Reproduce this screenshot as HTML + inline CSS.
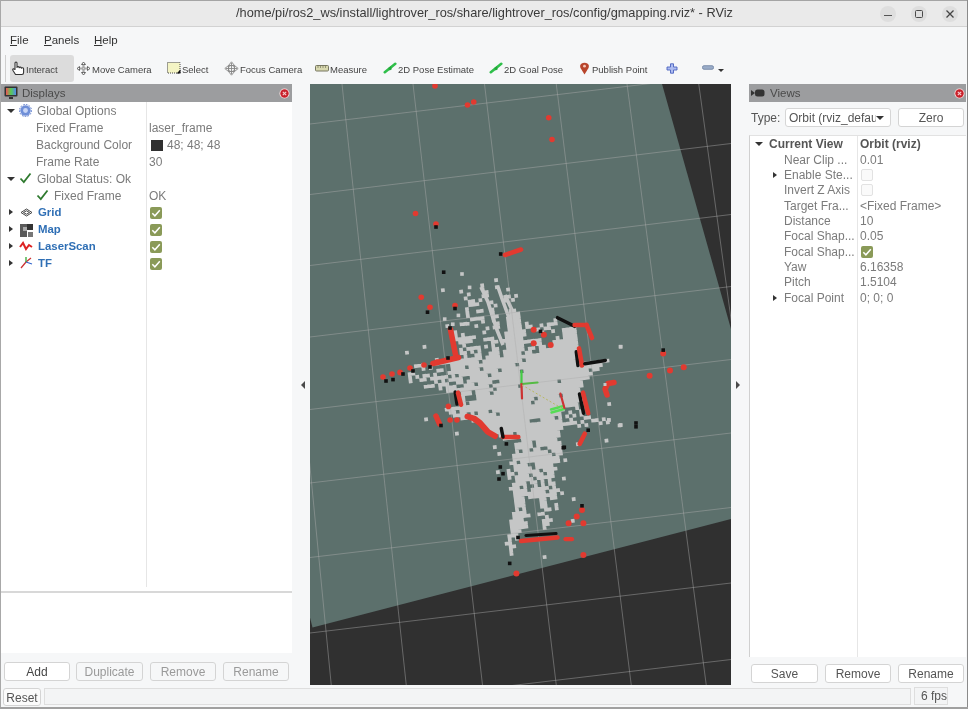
<!DOCTYPE html>
<html><head><meta charset="utf-8">
<style>
*{margin:0;padding:0;box-sizing:border-box}
html,body{width:968px;height:709px;overflow:hidden;background:#f6f7f8;font-family:"Liberation Sans",sans-serif;color:#3c3c3c}
.a{position:absolute}
.t{position:absolute;white-space:nowrap;line-height:1;will-change:transform}
#title{left:0;top:0;width:968px;height:27px;background:#eaeaea;border-top:1px solid #a4a4a4;border-bottom:1px solid #d2d2d2}
.wc{position:absolute;top:6px;width:16px;height:16px;border-radius:50%;background:#dedede}
.hdr{position:absolute;height:18px;background:#9c9d9f}
.tb{font-size:9.5px;color:#444}
.tree{font-size:12px;color:#7b7b7b}
.btn{will-change:transform;position:absolute;height:19px;border:1px solid #d4d4d4;border-radius:3px;background:#fbfbfb;font-size:12px;text-align:center;line-height:18.5px;color:#555}
.cb{position:absolute;width:12px;height:12px;border-radius:2px;background:#8a9a58}
.cbe{position:absolute;width:12px;height:12px;border-radius:2px;border:1px solid #e2e2e2;background:#fafafa}
.arr{position:absolute;width:0;height:0;border-top:3.5px solid transparent;border-bottom:3.5px solid transparent;border-left:4px solid #333}
.arrd{position:absolute;width:0;height:0;border-left:4px solid transparent;border-right:4px solid transparent;border-top:4px solid #333}
</style></head><body>
<!-- title bar -->
<div id="title" class="a"></div>
<div class="a" style="left:0;top:0;width:1px;height:709px;background:#a8a8a8"></div>
<div class="a" style="left:967px;top:0;width:1px;height:709px;background:#8a8a8a"></div>
<div class="t" style="left:236px;top:7px;font-size:12.78px;color:#3a3a3a">/home/pi/ros2_ws/install/lightrover_ros/share/lightrover_ros/config/gmapping.rviz* - RViz</div>
<div class="wc" style="left:880px"></div>
<div class="wc" style="left:911px"></div>
<div class="wc" style="left:942px"></div>
<div class="a" style="left:884px;top:15px;width:8px;height:1.3px;background:#555"></div>
<div class="a" style="left:915px;top:10px;width:8px;height:8px;border:1.3px solid #4a4a4a;border-radius:1.5px"></div>
<svg class="a" style="left:946px;top:10px" width="8" height="8"><path d="M0.5 0.5L7.5 7.5M7.5 0.5L0.5 7.5" stroke="#444" stroke-width="1.3"/></svg>

<!-- menu -->
<div class="t" style="left:10px;top:35px;font-size:11.5px;color:#333"><u>F</u>ile</div>
<div class="t" style="left:44px;top:35px;font-size:11.5px;color:#333"><u>P</u>anels</div>
<div class="t" style="left:94px;top:35px;font-size:11.5px;color:#333"><u>H</u>elp</div>

<!-- toolbar -->
<div class="a" style="left:5px;top:55px;width:1px;height:27px;background:#cfcfcf"></div>
<div class="a" style="left:10px;top:55px;width:64px;height:27px;background:#dcdcdc;border-radius:3px"></div>
<div class="t tb" style="left:26px;top:65px">Interact</div>
<div class="t tb" style="left:92px;top:65px">Move Camera</div>
<div class="t tb" style="left:182px;top:65px">Select</div>
<div class="t tb" style="left:240px;top:65px">Focus Camera</div>
<div class="t tb" style="left:330px;top:65px">Measure</div>
<div class="t tb" style="left:398px;top:65px">2D Pose Estimate</div>
<div class="t tb" style="left:504px;top:65px">2D Goal Pose</div>
<div class="t tb" style="left:592px;top:65px">Publish Point</div>

<!-- toolbar icons -->
<svg class="a" style="left:11px;top:61px" width="15" height="15" viewBox="0 0 15 15"><path d="M4.5 13.5L2 9.5Q1.2 8 2.5 7.8L4 8.5V2Q4 1 5 1Q6 1 6 2V6.5Q6.2 5.5 7.2 5.6Q8.2 5.7 8.2 6.8Q8.5 6 9.4 6.1Q10.4 6.2 10.4 7.3Q10.8 6.6 11.7 6.8Q12.6 7 12.6 8V11.5Q12.6 13.5 11 13.5Z" fill="#fff" stroke="#333" stroke-width="1.1" stroke-linejoin="round"/></svg>
<svg class="a" style="left:76px;top:61px" width="15" height="15" viewBox="0 0 15 15"><path d="M7.5 1L5.5 3.5H9.5ZM7.5 14L5.5 11.5H9.5ZM1 7.5L3.5 5.5V9.5ZM14 7.5L11.5 5.5V9.5Z" fill="#fff" stroke="#555" stroke-width="0.9"/><path d="M7.5 3.5V11.5M3.5 7.5H11.5" stroke="#555" stroke-width="1.6"/><path d="M7.5 3.5V11.5M3.5 7.5H11.5" stroke="#fff" stroke-width="0.5"/></svg>
<svg class="a" style="left:167px;top:62px" width="14" height="12" viewBox="0 0 14 12"><rect x="0.5" y="0.5" width="12.5" height="10.5" fill="#f4f4c4" stroke="#444" stroke-width="1" stroke-dasharray="1,1"/><path d="M13.5 7.5V11.5H9.5Z" fill="#111"/></svg>
<svg class="a" style="left:224px;top:61px" width="15" height="15" viewBox="0 0 15 15"><path d="M7.5 0.8L10.5 4.5H4.5ZM7.5 14.2L10.5 10.5H4.5ZM0.8 7.5L4.5 4.5V10.5ZM14.2 7.5L10.5 4.5V10.5Z" fill="#f0f0f0" stroke="#888" stroke-width="0.9"/><circle cx="7.5" cy="7.5" r="3.2" fill="none" stroke="#888" stroke-width="1"/><path d="M7.5 2V13M2 7.5H13" stroke="#888" stroke-width="0.9"/></svg>
<svg class="a" style="left:315px;top:65px" width="14" height="7" viewBox="0 0 14 7"><rect x="0.5" y="0.5" width="13" height="5.5" rx="1" fill="#d9d9b0" stroke="#777760" stroke-width="1"/><path d="M3 1V3M5.5 1V3M8 1V3M10.5 1V3" stroke="#777760" stroke-width="0.7"/></svg>
<svg class="a" style="left:383px;top:62px" width="14" height="12" viewBox="0 0 14 12"><path d="M1.8 10.2L12.3 1.8" stroke="#2fbf4a" stroke-width="2.6" stroke-linecap="round"/><path d="M5.2 6L7.8 4.2L8.8 7.2L6.6 8.6Z" fill="#22a83a"/></svg>
<svg class="a" style="left:489px;top:62px" width="14" height="12" viewBox="0 0 14 12"><path d="M1.8 10.2L12.3 1.8" stroke="#2fbf4a" stroke-width="2.6" stroke-linecap="round"/><path d="M5.2 6L7.8 4.2L8.8 7.2L6.6 8.6Z" fill="#22a83a"/></svg>
<svg class="a" style="left:579px;top:62px" width="11" height="13" viewBox="0 0 11 13"><path d="M5.5 12.5L1.8 6.5Q0.8 4.8 1.2 3.4Q2 0.8 5.5 0.8Q9 0.8 9.8 3.4Q10.2 4.8 9.2 6.5Z" fill="#b8452c"/><circle cx="5.5" cy="4.2" r="1.4" fill="#f3c6b8"/></svg>
<svg class="a" style="left:666px;top:63px" width="12" height="11" viewBox="0 0 12 11"><path d="M4.5 0.8H7.5V4H11V7H7.5V10.2H4.5V7H1V4H4.5Z" fill="#aebcf0" stroke="#4a62c0" stroke-width="0.9" stroke-linejoin="round"/></svg>
<svg class="a" style="left:702px;top:65px" width="12" height="5" viewBox="0 0 12 5"><rect x="0.5" y="0.7" width="11" height="3.6" rx="1.5" fill="#9aacc8" stroke="#6a7fa0" stroke-width="0.8"/></svg>
<div class="arrd" style="left:718px;top:69px;border-left-width:3px;border-right-width:3px;border-top-width:3.5px"></div>
<!-- left panel -->
<div class="hdr" style="left:1px;top:84px;width:291px"></div>
<div class="t" style="left:22px;top:88px;font-size:11.5px;color:#4a4a4a">Displays</div>
<svg class="a" style="left:4px;top:86px" width="14" height="14" viewBox="0 0 14 14"><rect x="0.5" y="0.5" width="13" height="10" rx="1" fill="#333"/><rect x="2" y="2" width="10" height="7" fill="url(#rg)"/><defs><linearGradient id="rg" x1="0" x2="1"><stop offset="0" stop-color="#e55"/><stop offset="0.5" stop-color="#5c5"/><stop offset="1" stop-color="#58e"/></linearGradient></defs><rect x="5" y="11" width="4" height="2" fill="#333"/></svg>
<div class="a" style="left:1px;top:102px;width:291px;height:490px;background:#fff"></div>
<div class="a" style="left:146px;top:102px;width:1px;height:485px;background:#e6e6e6"></div>
<div class="a" style="left:1px;top:591px;width:291px;height:2px;background:#d8d8d8"></div>
<div class="a" style="left:1px;top:593px;width:291px;height:60px;background:#fff"></div>

<!-- displays tree -->
<div class="arrd" style="left:7px;top:109px"></div>
<svg class="a" style="left:19px;top:104px" width="13" height="13" viewBox="0 0 13 13"><circle cx="6.5" cy="6.5" r="5.2" fill="#6f8fd8"/><circle cx="6.5" cy="6.5" r="2.4" fill="#c9d6f5"/><circle cx="6.5" cy="6.5" r="6" fill="none" stroke="#5878c8" stroke-width="1" stroke-dasharray="1.6,1.2"/></svg>
<div class="t tree" style="left:37px;top:105px">Global Options</div>
<div class="t tree" style="left:36px;top:122px">Fixed Frame</div>
<div class="t tree" style="left:36px;top:139px">Background Color</div>
<div class="t tree" style="left:36px;top:156px">Frame Rate</div>
<div class="t tree" style="left:149px;top:122px">laser_frame</div>
<div class="a" style="left:151px;top:140px;width:12px;height:11px;background:#303030"></div>
<div class="t tree" style="left:167px;top:139px">48; 48; 48</div>
<div class="t tree" style="left:149px;top:156px">30</div>
<div class="arrd" style="left:7px;top:177px"></div>
<svg class="a" style="left:19px;top:172px" width="13" height="12" viewBox="0 0 13 12"><path d="M1.5 6.5L4.8 10L11.5 1.5" stroke="#2f7a2f" stroke-width="1.8" fill="none"/></svg>
<div class="t tree" style="left:37px;top:173px">Global Status: Ok</div>
<svg class="a" style="left:36px;top:189px" width="13" height="12" viewBox="0 0 13 12"><path d="M1.5 6.5L4.8 10L11.5 1.5" stroke="#2f7a2f" stroke-width="1.8" fill="none"/></svg>
<div class="t tree" style="left:54px;top:190px">Fixed Frame</div>
<div class="t tree" style="left:149px;top:190px">OK</div>
<div class="arr" style="left:9px;top:209px"></div>
<div class="arr" style="left:9px;top:226px"></div>
<div class="arr" style="left:9px;top:243px"></div>
<div class="arr" style="left:9px;top:260px"></div>
<svg class="a" style="left:20px;top:208px" width="13" height="9" viewBox="0 0 13 9"><path d="M1 4.5L6.5 1L12 4.5L6.5 8Z M3.5 4.5L6.5 2.8L9.5 4.5L6.5 6.2Z" stroke="#444" stroke-width="1" fill="none"/></svg>
<svg class="a" style="left:20px;top:224px" width="13" height="13" viewBox="0 0 13 13"><rect x="0" y="0" width="7" height="13" fill="#5a5a5a"/><rect x="7" y="0" width="6" height="6" fill="#333"/><rect x="3" y="3" width="4" height="4" fill="#aaa"/><rect x="8" y="8" width="5" height="5" fill="#777"/></svg>
<svg class="a" style="left:19px;top:241px" width="14" height="10" viewBox="0 0 14 10"><path d="M1 6L4 2L7 8L10 4L13 6" stroke="#d22" stroke-width="2" fill="none"/></svg>
<svg class="a" style="left:19px;top:256px" width="14" height="13" viewBox="0 0 14 13"><path d="M2 12L7 6L12 2" stroke="#c33" stroke-width="1.3" fill="none"/><path d="M7 6L7 1" stroke="#3a3" stroke-width="1.3"/><path d="M7 6L13 8" stroke="#36c" stroke-width="1.3"/></svg>
<div class="t" style="left:38px;top:207px;font-size:11.4px;font-weight:bold;color:#2f6fb5">Grid</div>
<div class="t" style="left:38px;top:224px;font-size:11.4px;font-weight:bold;color:#2f6fb5">Map</div>
<div class="t" style="left:38px;top:241px;font-size:11.4px;font-weight:bold;color:#2f6fb5">LaserScan</div>
<div class="t" style="left:38px;top:258px;font-size:11.4px;font-weight:bold;color:#2f6fb5">TF</div>
<div class="cb" style="left:150px;top:207px"><svg width="12" height="12" viewBox="0 0 12 12" style="position:absolute;left:0;top:0"><path d="M2.3 6.2L4.9 8.8L9.8 3.2" stroke="#fff" stroke-width="1.5" fill="none"/></svg></div>
<div class="cb" style="left:150px;top:224px"><svg width="12" height="12" viewBox="0 0 12 12" style="position:absolute;left:0;top:0"><path d="M2.3 6.2L4.9 8.8L9.8 3.2" stroke="#fff" stroke-width="1.5" fill="none"/></svg></div>
<div class="cb" style="left:150px;top:241px"><svg width="12" height="12" viewBox="0 0 12 12" style="position:absolute;left:0;top:0"><path d="M2.3 6.2L4.9 8.8L9.8 3.2" stroke="#fff" stroke-width="1.5" fill="none"/></svg></div>
<div class="cb" style="left:150px;top:258px"><svg width="12" height="12" viewBox="0 0 12 12" style="position:absolute;left:0;top:0"><path d="M2.3 6.2L4.9 8.8L9.8 3.2" stroke="#fff" stroke-width="1.5" fill="none"/></svg></div>
<!-- buttons -->
<div class="btn" style="left:4px;top:662px;width:66px;color:#444;background:#fff">Add</div>
<div class="btn" style="left:76px;top:662px;width:67px;color:#9a9a9a;background:#f6f7f8">Duplicate</div>
<div class="btn" style="left:150px;top:662px;width:66px;color:#9a9a9a;background:#f6f7f8">Remove</div>
<div class="btn" style="left:223px;top:662px;width:66px;color:#9a9a9a;background:#f6f7f8">Rename</div>
<!-- 3D view -->
<svg class="a" style="left:310px;top:84px" width="421" height="601" viewBox="310 84 421 601">
<!--VIEW-->
<rect x="310" y="84" width="421" height="601" fill="#303030"/>
<polygon points="310,84 662,84 731,329 731,519 312.5,627.5 310,617.5" fill="#5c706c"/>
<defs><filter id="bl" x="-5%" y="-5%" width="110%" height="110%"><feGaussianBlur stdDeviation="0.4"/></filter></defs>
<g filter="url(#bl)"><path d="M494.0 278.5l3.72 -0.46 0.46 3.72 -3.72 0.46zM440.8 288.6l3.72 -0.46 0.46 3.72 -3.72 0.46zM480.1 283.8l3.72 -0.46 0.46 3.72 -3.72 0.46zM459.1 290.0l3.72 -0.46 0.46 3.72 -3.72 0.46zM480.5 287.4l3.72 -0.46 0.46 3.72 -3.72 0.46zM494.8 285.6l3.72 -0.46 0.46 3.72 -3.72 0.46zM466.7 292.7l3.72 -0.46 0.46 3.72 -3.72 0.46zM484.6 290.5l3.72 -0.46 0.46 3.72 -3.72 0.46zM506.0 287.9l3.72 -0.46 0.46 3.72 -3.72 0.46zM463.6 296.7l3.72 -0.46 0.46 3.72 -3.72 0.46zM481.4 294.5l3.72 -0.46 0.46 3.72 -3.72 0.46zM485.0 294.1l3.72 -0.46 0.46 3.72 -3.72 0.46zM467.6 299.9l3.72 -0.46 0.46 3.72 -3.72 0.46zM471.1 299.4l3.72 -0.46 0.46 3.72 -3.72 0.46zM478.3 298.6l3.72 -0.46 0.46 3.72 -3.72 0.46zM503.3 295.5l3.72 -0.46 0.46 3.72 -3.72 0.46zM506.9 295.0l3.72 -0.46 0.46 3.72 -3.72 0.46zM514.0 294.2l3.72 -0.46 0.46 3.72 -3.72 0.46zM468.0 303.4l3.72 -0.46 0.46 3.72 -3.72 0.46zM471.6 303.0l3.72 -0.46 0.46 3.72 -3.72 0.46zM475.2 302.6l3.72 -0.46 0.46 3.72 -3.72 0.46zM489.4 300.8l3.72 -0.46 0.46 3.72 -3.72 0.46zM503.7 299.1l3.72 -0.46 0.46 3.72 -3.72 0.46zM510.9 298.2l3.72 -0.46 0.46 3.72 -3.72 0.46zM464.9 307.5l3.72 -0.46 0.46 3.72 -3.72 0.46zM493.5 303.9l3.72 -0.46 0.46 3.72 -3.72 0.46zM465.3 311.0l3.72 -0.46 0.46 3.72 -3.72 0.46zM476.0 309.7l3.72 -0.46 0.46 3.72 -3.72 0.46zM479.6 309.3l3.72 -0.46 0.46 3.72 -3.72 0.46zM490.3 308.0l3.72 -0.46 0.46 3.72 -3.72 0.46zM465.8 314.6l3.72 -0.46 0.46 3.72 -3.72 0.46zM490.8 311.5l3.72 -0.46 0.46 3.72 -3.72 0.46zM508.6 309.3l3.72 -0.46 0.46 3.72 -3.72 0.46zM512.2 308.9l3.72 -0.46 0.46 3.72 -3.72 0.46zM469.8 317.7l3.72 -0.46 0.46 3.72 -3.72 0.46zM473.3 317.3l3.72 -0.46 0.46 3.72 -3.72 0.46zM476.9 316.9l3.72 -0.46 0.46 3.72 -3.72 0.46zM480.5 316.4l3.72 -0.46 0.46 3.72 -3.72 0.46zM491.2 315.1l3.72 -0.46 0.46 3.72 -3.72 0.46zM494.8 314.7l3.72 -0.46 0.46 3.72 -3.72 0.46zM509.1 312.9l3.72 -0.46 0.46 3.72 -3.72 0.46zM512.6 312.5l3.72 -0.46 0.46 3.72 -3.72 0.46zM516.2 312.0l3.72 -0.46 0.46 3.72 -3.72 0.46zM445.2 324.4l3.72 -0.46 0.46 3.72 -3.72 0.46zM459.5 322.6l3.72 -0.46 0.46 3.72 -3.72 0.46zM463.1 322.2l3.72 -0.46 0.46 3.72 -3.72 0.46zM480.9 320.0l3.72 -0.46 0.46 3.72 -3.72 0.46zM491.6 318.7l3.72 -0.46 0.46 3.72 -3.72 0.46zM505.9 316.9l3.72 -0.46 0.46 3.72 -3.72 0.46zM509.5 316.5l3.72 -0.46 0.46 3.72 -3.72 0.46zM513.1 316.0l3.72 -0.46 0.46 3.72 -3.72 0.46zM516.7 315.6l3.72 -0.46 0.46 3.72 -3.72 0.46zM474.2 324.4l3.72 -0.46 0.46 3.72 -3.72 0.46zM495.7 321.8l3.72 -0.46 0.46 3.72 -3.72 0.46zM506.4 320.5l3.72 -0.46 0.46 3.72 -3.72 0.46zM509.9 320.1l3.72 -0.46 0.46 3.72 -3.72 0.46zM513.5 319.6l3.72 -0.46 0.46 3.72 -3.72 0.46zM517.1 319.2l3.72 -0.46 0.46 3.72 -3.72 0.46zM453.2 330.6l3.72 -0.46 0.46 3.72 -3.72 0.46zM485.4 326.7l3.72 -0.46 0.46 3.72 -3.72 0.46zM492.5 325.8l3.72 -0.46 0.46 3.72 -3.72 0.46zM496.1 325.4l3.72 -0.46 0.46 3.72 -3.72 0.46zM506.8 324.1l3.72 -0.46 0.46 3.72 -3.72 0.46zM510.4 323.6l3.72 -0.46 0.46 3.72 -3.72 0.46zM514.0 323.2l3.72 -0.46 0.46 3.72 -3.72 0.46zM517.5 322.8l3.72 -0.46 0.46 3.72 -3.72 0.46zM524.7 321.9l3.72 -0.46 0.46 3.72 -3.72 0.46zM553.3 318.4l3.72 -0.46 0.46 3.72 -3.72 0.46zM453.7 334.2l3.72 -0.46 0.46 3.72 -3.72 0.46zM460.8 333.3l3.72 -0.46 0.46 3.72 -3.72 0.46zM482.2 330.7l3.72 -0.46 0.46 3.72 -3.72 0.46zM507.3 327.6l3.72 -0.46 0.46 3.72 -3.72 0.46zM510.8 327.2l3.72 -0.46 0.46 3.72 -3.72 0.46zM514.4 326.8l3.72 -0.46 0.46 3.72 -3.72 0.46zM518.0 326.3l3.72 -0.46 0.46 3.72 -3.72 0.46zM525.1 325.4l3.72 -0.46 0.46 3.72 -3.72 0.46zM528.7 325.0l3.72 -0.46 0.46 3.72 -3.72 0.46zM539.4 323.7l3.72 -0.46 0.46 3.72 -3.72 0.46zM546.6 322.8l3.72 -0.46 0.46 3.72 -3.72 0.46zM550.1 322.4l3.72 -0.46 0.46 3.72 -3.72 0.46zM553.7 321.9l3.72 -0.46 0.46 3.72 -3.72 0.46zM454.1 337.8l3.72 -0.46 0.46 3.72 -3.72 0.46zM457.7 337.4l3.72 -0.46 0.46 3.72 -3.72 0.46zM461.2 336.9l3.72 -0.46 0.46 3.72 -3.72 0.46zM464.8 336.5l3.72 -0.46 0.46 3.72 -3.72 0.46zM468.4 336.0l3.72 -0.46 0.46 3.72 -3.72 0.46zM472.0 335.6l3.72 -0.46 0.46 3.72 -3.72 0.46zM504.1 331.7l3.72 -0.46 0.46 3.72 -3.72 0.46zM507.7 331.2l3.72 -0.46 0.46 3.72 -3.72 0.46zM511.3 330.8l3.72 -0.46 0.46 3.72 -3.72 0.46zM514.8 330.3l3.72 -0.46 0.46 3.72 -3.72 0.46zM518.4 329.9l3.72 -0.46 0.46 3.72 -3.72 0.46zM522.0 329.5l3.72 -0.46 0.46 3.72 -3.72 0.46zM532.7 328.1l3.72 -0.46 0.46 3.72 -3.72 0.46zM536.3 327.7l3.72 -0.46 0.46 3.72 -3.72 0.46zM543.4 326.8l3.72 -0.46 0.46 3.72 -3.72 0.46zM547.0 326.4l3.72 -0.46 0.46 3.72 -3.72 0.46zM422.4 345.3l3.72 -0.46 0.46 3.72 -3.72 0.46zM458.1 340.9l3.72 -0.46 0.46 3.72 -3.72 0.46zM461.7 340.5l3.72 -0.46 0.46 3.72 -3.72 0.46zM465.2 340.1l3.72 -0.46 0.46 3.72 -3.72 0.46zM468.8 339.6l3.72 -0.46 0.46 3.72 -3.72 0.46zM483.1 337.9l3.72 -0.46 0.46 3.72 -3.72 0.46zM486.7 337.4l3.72 -0.46 0.46 3.72 -3.72 0.46zM490.3 337.0l3.72 -0.46 0.46 3.72 -3.72 0.46zM504.6 335.2l3.72 -0.46 0.46 3.72 -3.72 0.46zM508.1 334.8l3.72 -0.46 0.46 3.72 -3.72 0.46zM511.7 334.3l3.72 -0.46 0.46 3.72 -3.72 0.46zM515.3 333.9l3.72 -0.46 0.46 3.72 -3.72 0.46zM518.8 333.5l3.72 -0.46 0.46 3.72 -3.72 0.46zM522.4 333.0l3.72 -0.46 0.46 3.72 -3.72 0.46zM540.3 330.8l3.72 -0.46 0.46 3.72 -3.72 0.46zM551.0 329.5l3.72 -0.46 0.46 3.72 -3.72 0.46zM561.7 328.2l3.72 -0.46 0.46 3.72 -3.72 0.46zM565.3 327.8l3.72 -0.46 0.46 3.72 -3.72 0.46zM568.9 327.3l3.72 -0.46 0.46 3.72 -3.72 0.46zM572.4 326.9l3.72 -0.46 0.46 3.72 -3.72 0.46zM404.9 351.1l3.72 -0.46 0.46 3.72 -3.72 0.46zM462.1 344.1l3.72 -0.46 0.46 3.72 -3.72 0.46zM490.7 340.6l3.72 -0.46 0.46 3.72 -3.72 0.46zM494.3 340.1l3.72 -0.46 0.46 3.72 -3.72 0.46zM501.4 339.2l3.72 -0.46 0.46 3.72 -3.72 0.46zM505.0 338.8l3.72 -0.46 0.46 3.72 -3.72 0.46zM508.6 338.4l3.72 -0.46 0.46 3.72 -3.72 0.46zM512.1 337.9l3.72 -0.46 0.46 3.72 -3.72 0.46zM515.7 337.5l3.72 -0.46 0.46 3.72 -3.72 0.46zM519.3 337.0l3.72 -0.46 0.46 3.72 -3.72 0.46zM562.2 331.8l3.72 -0.46 0.46 3.72 -3.72 0.46zM565.7 331.3l3.72 -0.46 0.46 3.72 -3.72 0.46zM569.3 330.9l3.72 -0.46 0.46 3.72 -3.72 0.46zM572.9 330.5l3.72 -0.46 0.46 3.72 -3.72 0.46zM459.0 348.1l3.72 -0.46 0.46 3.72 -3.72 0.46zM466.1 347.2l3.72 -0.46 0.46 3.72 -3.72 0.46zM469.7 346.8l3.72 -0.46 0.46 3.72 -3.72 0.46zM473.3 346.3l3.72 -0.46 0.46 3.72 -3.72 0.46zM476.8 345.9l3.72 -0.46 0.46 3.72 -3.72 0.46zM484.0 345.0l3.72 -0.46 0.46 3.72 -3.72 0.46zM491.1 344.1l3.72 -0.46 0.46 3.72 -3.72 0.46zM505.4 342.4l3.72 -0.46 0.46 3.72 -3.72 0.46zM509.0 341.9l3.72 -0.46 0.46 3.72 -3.72 0.46zM512.6 341.5l3.72 -0.46 0.46 3.72 -3.72 0.46zM516.2 341.1l3.72 -0.46 0.46 3.72 -3.72 0.46zM519.7 340.6l3.72 -0.46 0.46 3.72 -3.72 0.46zM523.3 340.2l3.72 -0.46 0.46 3.72 -3.72 0.46zM526.9 339.7l3.72 -0.46 0.46 3.72 -3.72 0.46zM530.4 339.3l3.72 -0.46 0.46 3.72 -3.72 0.46zM534.0 338.9l3.72 -0.46 0.46 3.72 -3.72 0.46zM537.6 338.4l3.72 -0.46 0.46 3.72 -3.72 0.46zM555.5 336.2l3.72 -0.46 0.46 3.72 -3.72 0.46zM562.6 335.4l3.72 -0.46 0.46 3.72 -3.72 0.46zM566.2 334.9l3.72 -0.46 0.46 3.72 -3.72 0.46zM569.7 334.5l3.72 -0.46 0.46 3.72 -3.72 0.46zM573.3 334.0l3.72 -0.46 0.46 3.72 -3.72 0.46zM459.4 351.6l3.72 -0.46 0.46 3.72 -3.72 0.46zM463.0 351.2l3.72 -0.46 0.46 3.72 -3.72 0.46zM470.1 350.3l3.72 -0.46 0.46 3.72 -3.72 0.46zM477.3 349.5l3.72 -0.46 0.46 3.72 -3.72 0.46zM491.6 347.7l3.72 -0.46 0.46 3.72 -3.72 0.46zM495.2 347.3l3.72 -0.46 0.46 3.72 -3.72 0.46zM505.9 345.9l3.72 -0.46 0.46 3.72 -3.72 0.46zM509.4 345.5l3.72 -0.46 0.46 3.72 -3.72 0.46zM513.0 345.1l3.72 -0.46 0.46 3.72 -3.72 0.46zM516.6 344.6l3.72 -0.46 0.46 3.72 -3.72 0.46zM520.2 344.2l3.72 -0.46 0.46 3.72 -3.72 0.46zM534.5 342.4l3.72 -0.46 0.46 3.72 -3.72 0.46zM538.0 342.0l3.72 -0.46 0.46 3.72 -3.72 0.46zM552.3 340.2l3.72 -0.46 0.46 3.72 -3.72 0.46zM555.9 339.8l3.72 -0.46 0.46 3.72 -3.72 0.46zM559.5 339.4l3.72 -0.46 0.46 3.72 -3.72 0.46zM563.0 338.9l3.72 -0.46 0.46 3.72 -3.72 0.46zM566.6 338.5l3.72 -0.46 0.46 3.72 -3.72 0.46zM570.2 338.0l3.72 -0.46 0.46 3.72 -3.72 0.46zM573.8 337.6l3.72 -0.46 0.46 3.72 -3.72 0.46zM434.8 358.3l3.72 -0.46 0.46 3.72 -3.72 0.46zM463.4 354.8l3.72 -0.46 0.46 3.72 -3.72 0.46zM474.2 353.5l3.72 -0.46 0.46 3.72 -3.72 0.46zM477.7 353.0l3.72 -0.46 0.46 3.72 -3.72 0.46zM488.4 351.7l3.72 -0.46 0.46 3.72 -3.72 0.46zM492.0 351.3l3.72 -0.46 0.46 3.72 -3.72 0.46zM495.6 350.8l3.72 -0.46 0.46 3.72 -3.72 0.46zM502.7 350.0l3.72 -0.46 0.46 3.72 -3.72 0.46zM506.3 349.5l3.72 -0.46 0.46 3.72 -3.72 0.46zM509.9 349.1l3.72 -0.46 0.46 3.72 -3.72 0.46zM513.5 348.6l3.72 -0.46 0.46 3.72 -3.72 0.46zM517.0 348.2l3.72 -0.46 0.46 3.72 -3.72 0.46zM520.6 347.8l3.72 -0.46 0.46 3.72 -3.72 0.46zM527.7 346.9l3.72 -0.46 0.46 3.72 -3.72 0.46zM531.3 346.4l3.72 -0.46 0.46 3.72 -3.72 0.46zM538.5 345.6l3.72 -0.46 0.46 3.72 -3.72 0.46zM542.0 345.1l3.72 -0.46 0.46 3.72 -3.72 0.46zM549.2 344.3l3.72 -0.46 0.46 3.72 -3.72 0.46zM552.8 343.8l3.72 -0.46 0.46 3.72 -3.72 0.46zM556.3 343.4l3.72 -0.46 0.46 3.72 -3.72 0.46zM559.9 342.9l3.72 -0.46 0.46 3.72 -3.72 0.46zM563.5 342.5l3.72 -0.46 0.46 3.72 -3.72 0.46zM567.1 342.1l3.72 -0.46 0.46 3.72 -3.72 0.46zM570.6 341.6l3.72 -0.46 0.46 3.72 -3.72 0.46zM574.2 341.2l3.72 -0.46 0.46 3.72 -3.72 0.46zM413.8 364.5l3.72 -0.46 0.46 3.72 -3.72 0.46zM417.4 364.1l3.72 -0.46 0.46 3.72 -3.72 0.46zM421.0 363.6l3.72 -0.46 0.46 3.72 -3.72 0.46zM431.7 362.3l3.72 -0.46 0.46 3.72 -3.72 0.46zM435.3 361.9l3.72 -0.46 0.46 3.72 -3.72 0.46zM438.9 361.4l3.72 -0.46 0.46 3.72 -3.72 0.46zM442.4 361.0l3.72 -0.46 0.46 3.72 -3.72 0.46zM446.0 360.6l3.72 -0.46 0.46 3.72 -3.72 0.46zM449.6 360.1l3.72 -0.46 0.46 3.72 -3.72 0.46zM453.2 359.7l3.72 -0.46 0.46 3.72 -3.72 0.46zM456.7 359.2l3.72 -0.46 0.46 3.72 -3.72 0.46zM460.3 358.8l3.72 -0.46 0.46 3.72 -3.72 0.46zM463.9 358.4l3.72 -0.46 0.46 3.72 -3.72 0.46zM467.4 357.9l3.72 -0.46 0.46 3.72 -3.72 0.46zM471.0 357.5l3.72 -0.46 0.46 3.72 -3.72 0.46zM474.6 357.0l3.72 -0.46 0.46 3.72 -3.72 0.46zM478.2 356.6l3.72 -0.46 0.46 3.72 -3.72 0.46zM485.3 355.7l3.72 -0.46 0.46 3.72 -3.72 0.46zM488.9 355.3l3.72 -0.46 0.46 3.72 -3.72 0.46zM492.5 354.8l3.72 -0.46 0.46 3.72 -3.72 0.46zM496.0 354.4l3.72 -0.46 0.46 3.72 -3.72 0.46zM503.2 353.5l3.72 -0.46 0.46 3.72 -3.72 0.46zM506.7 353.1l3.72 -0.46 0.46 3.72 -3.72 0.46zM510.3 352.7l3.72 -0.46 0.46 3.72 -3.72 0.46zM513.9 352.2l3.72 -0.46 0.46 3.72 -3.72 0.46zM517.5 351.8l3.72 -0.46 0.46 3.72 -3.72 0.46zM524.6 350.9l3.72 -0.46 0.46 3.72 -3.72 0.46zM528.2 350.5l3.72 -0.46 0.46 3.72 -3.72 0.46zM538.9 349.1l3.72 -0.46 0.46 3.72 -3.72 0.46zM542.5 348.7l3.72 -0.46 0.46 3.72 -3.72 0.46zM546.1 348.3l3.72 -0.46 0.46 3.72 -3.72 0.46zM549.6 347.8l3.72 -0.46 0.46 3.72 -3.72 0.46zM553.2 347.4l3.72 -0.46 0.46 3.72 -3.72 0.46zM556.8 347.0l3.72 -0.46 0.46 3.72 -3.72 0.46zM560.3 346.5l3.72 -0.46 0.46 3.72 -3.72 0.46zM563.9 346.1l3.72 -0.46 0.46 3.72 -3.72 0.46zM567.5 345.6l3.72 -0.46 0.46 3.72 -3.72 0.46zM571.1 345.2l3.72 -0.46 0.46 3.72 -3.72 0.46zM574.6 344.8l3.72 -0.46 0.46 3.72 -3.72 0.46zM421.4 367.2l3.72 -0.46 0.46 3.72 -3.72 0.46zM428.6 366.3l3.72 -0.46 0.46 3.72 -3.72 0.46zM450.0 363.7l3.72 -0.46 0.46 3.72 -3.72 0.46zM453.6 363.2l3.72 -0.46 0.46 3.72 -3.72 0.46zM457.2 362.8l3.72 -0.46 0.46 3.72 -3.72 0.46zM460.7 362.4l3.72 -0.46 0.46 3.72 -3.72 0.46zM464.3 361.9l3.72 -0.46 0.46 3.72 -3.72 0.46zM467.9 361.5l3.72 -0.46 0.46 3.72 -3.72 0.46zM471.5 361.1l3.72 -0.46 0.46 3.72 -3.72 0.46zM475.0 360.6l3.72 -0.46 0.46 3.72 -3.72 0.46zM482.2 359.7l3.72 -0.46 0.46 3.72 -3.72 0.46zM485.7 359.3l3.72 -0.46 0.46 3.72 -3.72 0.46zM489.3 358.9l3.72 -0.46 0.46 3.72 -3.72 0.46zM492.9 358.4l3.72 -0.46 0.46 3.72 -3.72 0.46zM496.5 358.0l3.72 -0.46 0.46 3.72 -3.72 0.46zM500.0 357.5l3.72 -0.46 0.46 3.72 -3.72 0.46zM503.6 357.1l3.72 -0.46 0.46 3.72 -3.72 0.46zM507.2 356.7l3.72 -0.46 0.46 3.72 -3.72 0.46zM510.8 356.2l3.72 -0.46 0.46 3.72 -3.72 0.46zM514.3 355.8l3.72 -0.46 0.46 3.72 -3.72 0.46zM517.9 355.3l3.72 -0.46 0.46 3.72 -3.72 0.46zM521.5 354.9l3.72 -0.46 0.46 3.72 -3.72 0.46zM525.1 354.5l3.72 -0.46 0.46 3.72 -3.72 0.46zM528.6 354.0l3.72 -0.46 0.46 3.72 -3.72 0.46zM532.2 353.6l3.72 -0.46 0.46 3.72 -3.72 0.46zM535.8 353.2l3.72 -0.46 0.46 3.72 -3.72 0.46zM539.3 352.7l3.72 -0.46 0.46 3.72 -3.72 0.46zM542.9 352.3l3.72 -0.46 0.46 3.72 -3.72 0.46zM546.5 351.8l3.72 -0.46 0.46 3.72 -3.72 0.46zM550.1 351.4l3.72 -0.46 0.46 3.72 -3.72 0.46zM553.6 351.0l3.72 -0.46 0.46 3.72 -3.72 0.46zM557.2 350.5l3.72 -0.46 0.46 3.72 -3.72 0.46zM560.8 350.1l3.72 -0.46 0.46 3.72 -3.72 0.46zM564.4 349.6l3.72 -0.46 0.46 3.72 -3.72 0.46zM567.9 349.2l3.72 -0.46 0.46 3.72 -3.72 0.46zM571.5 348.8l3.72 -0.46 0.46 3.72 -3.72 0.46zM575.1 348.3l3.72 -0.46 0.46 3.72 -3.72 0.46zM407.6 372.5l3.72 -0.46 0.46 3.72 -3.72 0.46zM411.2 372.1l3.72 -0.46 0.46 3.72 -3.72 0.46zM436.2 369.0l3.72 -0.46 0.46 3.72 -3.72 0.46zM439.7 368.6l3.72 -0.46 0.46 3.72 -3.72 0.46zM450.5 367.3l3.72 -0.46 0.46 3.72 -3.72 0.46zM454.0 366.8l3.72 -0.46 0.46 3.72 -3.72 0.46zM457.6 366.4l3.72 -0.46 0.46 3.72 -3.72 0.46zM461.2 365.9l3.72 -0.46 0.46 3.72 -3.72 0.46zM468.3 365.1l3.72 -0.46 0.46 3.72 -3.72 0.46zM471.9 364.6l3.72 -0.46 0.46 3.72 -3.72 0.46zM475.5 364.2l3.72 -0.46 0.46 3.72 -3.72 0.46zM479.0 363.7l3.72 -0.46 0.46 3.72 -3.72 0.46zM482.6 363.3l3.72 -0.46 0.46 3.72 -3.72 0.46zM486.2 362.9l3.72 -0.46 0.46 3.72 -3.72 0.46zM489.8 362.4l3.72 -0.46 0.46 3.72 -3.72 0.46zM493.3 362.0l3.72 -0.46 0.46 3.72 -3.72 0.46zM496.9 361.6l3.72 -0.46 0.46 3.72 -3.72 0.46zM500.5 361.1l3.72 -0.46 0.46 3.72 -3.72 0.46zM504.1 360.7l3.72 -0.46 0.46 3.72 -3.72 0.46zM507.6 360.2l3.72 -0.46 0.46 3.72 -3.72 0.46zM511.2 359.8l3.72 -0.46 0.46 3.72 -3.72 0.46zM514.8 359.4l3.72 -0.46 0.46 3.72 -3.72 0.46zM518.3 358.9l3.72 -0.46 0.46 3.72 -3.72 0.46zM525.5 358.0l3.72 -0.46 0.46 3.72 -3.72 0.46zM529.1 357.6l3.72 -0.46 0.46 3.72 -3.72 0.46zM532.6 357.2l3.72 -0.46 0.46 3.72 -3.72 0.46zM536.2 356.7l3.72 -0.46 0.46 3.72 -3.72 0.46zM539.8 356.3l3.72 -0.46 0.46 3.72 -3.72 0.46zM543.4 355.9l3.72 -0.46 0.46 3.72 -3.72 0.46zM546.9 355.4l3.72 -0.46 0.46 3.72 -3.72 0.46zM550.5 355.0l3.72 -0.46 0.46 3.72 -3.72 0.46zM554.1 354.5l3.72 -0.46 0.46 3.72 -3.72 0.46zM557.7 354.1l3.72 -0.46 0.46 3.72 -3.72 0.46zM561.2 353.7l3.72 -0.46 0.46 3.72 -3.72 0.46zM564.8 353.2l3.72 -0.46 0.46 3.72 -3.72 0.46zM568.4 352.8l3.72 -0.46 0.46 3.72 -3.72 0.46zM571.9 352.3l3.72 -0.46 0.46 3.72 -3.72 0.46zM575.5 351.9l3.72 -0.46 0.46 3.72 -3.72 0.46zM408.0 376.1l3.72 -0.46 0.46 3.72 -3.72 0.46zM415.2 375.2l3.72 -0.46 0.46 3.72 -3.72 0.46zM422.3 374.3l3.72 -0.46 0.46 3.72 -3.72 0.46zM425.9 373.9l3.72 -0.46 0.46 3.72 -3.72 0.46zM433.0 373.0l3.72 -0.46 0.46 3.72 -3.72 0.46zM447.3 371.3l3.72 -0.46 0.46 3.72 -3.72 0.46zM450.9 370.8l3.72 -0.46 0.46 3.72 -3.72 0.46zM454.5 370.4l3.72 -0.46 0.46 3.72 -3.72 0.46zM458.0 370.0l3.72 -0.46 0.46 3.72 -3.72 0.46zM461.6 369.5l3.72 -0.46 0.46 3.72 -3.72 0.46zM465.2 369.1l3.72 -0.46 0.46 3.72 -3.72 0.46zM468.8 368.6l3.72 -0.46 0.46 3.72 -3.72 0.46zM472.3 368.2l3.72 -0.46 0.46 3.72 -3.72 0.46zM475.9 367.8l3.72 -0.46 0.46 3.72 -3.72 0.46zM483.1 366.9l3.72 -0.46 0.46 3.72 -3.72 0.46zM486.6 366.4l3.72 -0.46 0.46 3.72 -3.72 0.46zM490.2 366.0l3.72 -0.46 0.46 3.72 -3.72 0.46zM493.8 365.6l3.72 -0.46 0.46 3.72 -3.72 0.46zM497.3 365.1l3.72 -0.46 0.46 3.72 -3.72 0.46zM500.9 364.7l3.72 -0.46 0.46 3.72 -3.72 0.46zM504.5 364.3l3.72 -0.46 0.46 3.72 -3.72 0.46zM508.1 363.8l3.72 -0.46 0.46 3.72 -3.72 0.46zM511.6 363.4l3.72 -0.46 0.46 3.72 -3.72 0.46zM518.8 362.5l3.72 -0.46 0.46 3.72 -3.72 0.46zM522.4 362.1l3.72 -0.46 0.46 3.72 -3.72 0.46zM525.9 361.6l3.72 -0.46 0.46 3.72 -3.72 0.46zM529.5 361.2l3.72 -0.46 0.46 3.72 -3.72 0.46zM533.1 360.7l3.72 -0.46 0.46 3.72 -3.72 0.46zM536.6 360.3l3.72 -0.46 0.46 3.72 -3.72 0.46zM540.2 359.9l3.72 -0.46 0.46 3.72 -3.72 0.46zM543.8 359.4l3.72 -0.46 0.46 3.72 -3.72 0.46zM547.4 359.0l3.72 -0.46 0.46 3.72 -3.72 0.46zM550.9 358.5l3.72 -0.46 0.46 3.72 -3.72 0.46zM554.5 358.1l3.72 -0.46 0.46 3.72 -3.72 0.46zM558.1 357.7l3.72 -0.46 0.46 3.72 -3.72 0.46zM561.7 357.2l3.72 -0.46 0.46 3.72 -3.72 0.46zM565.2 356.8l3.72 -0.46 0.46 3.72 -3.72 0.46zM568.8 356.4l3.72 -0.46 0.46 3.72 -3.72 0.46zM572.4 355.9l3.72 -0.46 0.46 3.72 -3.72 0.46zM576.0 355.5l3.72 -0.46 0.46 3.72 -3.72 0.46zM408.5 379.7l3.72 -0.46 0.46 3.72 -3.72 0.46zM419.2 378.4l3.72 -0.46 0.46 3.72 -3.72 0.46zM422.7 377.9l3.72 -0.46 0.46 3.72 -3.72 0.46zM429.9 377.0l3.72 -0.46 0.46 3.72 -3.72 0.46zM433.5 376.6l3.72 -0.46 0.46 3.72 -3.72 0.46zM437.0 376.2l3.72 -0.46 0.46 3.72 -3.72 0.46zM440.6 375.7l3.72 -0.46 0.46 3.72 -3.72 0.46zM444.2 375.3l3.72 -0.46 0.46 3.72 -3.72 0.46zM451.3 374.4l3.72 -0.46 0.46 3.72 -3.72 0.46zM458.5 373.5l3.72 -0.46 0.46 3.72 -3.72 0.46zM462.1 373.1l3.72 -0.46 0.46 3.72 -3.72 0.46zM465.6 372.6l3.72 -0.46 0.46 3.72 -3.72 0.46zM469.2 372.2l3.72 -0.46 0.46 3.72 -3.72 0.46zM472.8 371.8l3.72 -0.46 0.46 3.72 -3.72 0.46zM476.3 371.3l3.72 -0.46 0.46 3.72 -3.72 0.46zM479.9 370.9l3.72 -0.46 0.46 3.72 -3.72 0.46zM483.5 370.5l3.72 -0.46 0.46 3.72 -3.72 0.46zM487.1 370.0l3.72 -0.46 0.46 3.72 -3.72 0.46zM490.6 369.6l3.72 -0.46 0.46 3.72 -3.72 0.46zM494.2 369.1l3.72 -0.46 0.46 3.72 -3.72 0.46zM501.4 368.3l3.72 -0.46 0.46 3.72 -3.72 0.46zM504.9 367.8l3.72 -0.46 0.46 3.72 -3.72 0.46zM508.5 367.4l3.72 -0.46 0.46 3.72 -3.72 0.46zM512.1 366.9l3.72 -0.46 0.46 3.72 -3.72 0.46zM515.6 366.5l3.72 -0.46 0.46 3.72 -3.72 0.46zM519.2 366.1l3.72 -0.46 0.46 3.72 -3.72 0.46zM522.8 365.6l3.72 -0.46 0.46 3.72 -3.72 0.46zM526.4 365.2l3.72 -0.46 0.46 3.72 -3.72 0.46zM529.9 364.8l3.72 -0.46 0.46 3.72 -3.72 0.46zM533.5 364.3l3.72 -0.46 0.46 3.72 -3.72 0.46zM537.1 363.9l3.72 -0.46 0.46 3.72 -3.72 0.46zM540.7 363.4l3.72 -0.46 0.46 3.72 -3.72 0.46zM544.2 363.0l3.72 -0.46 0.46 3.72 -3.72 0.46zM547.8 362.6l3.72 -0.46 0.46 3.72 -3.72 0.46zM551.4 362.1l3.72 -0.46 0.46 3.72 -3.72 0.46zM555.0 361.7l3.72 -0.46 0.46 3.72 -3.72 0.46zM558.5 361.2l3.72 -0.46 0.46 3.72 -3.72 0.46zM562.1 360.8l3.72 -0.46 0.46 3.72 -3.72 0.46zM565.7 360.4l3.72 -0.46 0.46 3.72 -3.72 0.46zM569.2 359.9l3.72 -0.46 0.46 3.72 -3.72 0.46zM572.8 359.5l3.72 -0.46 0.46 3.72 -3.72 0.46zM433.9 380.2l3.72 -0.46 0.46 3.72 -3.72 0.46zM441.1 379.3l3.72 -0.46 0.46 3.72 -3.72 0.46zM448.2 378.4l3.72 -0.46 0.46 3.72 -3.72 0.46zM451.8 378.0l3.72 -0.46 0.46 3.72 -3.72 0.46zM455.3 377.5l3.72 -0.46 0.46 3.72 -3.72 0.46zM458.9 377.1l3.72 -0.46 0.46 3.72 -3.72 0.46zM469.6 375.8l3.72 -0.46 0.46 3.72 -3.72 0.46zM473.2 375.3l3.72 -0.46 0.46 3.72 -3.72 0.46zM476.8 374.9l3.72 -0.46 0.46 3.72 -3.72 0.46zM480.4 374.5l3.72 -0.46 0.46 3.72 -3.72 0.46zM483.9 374.0l3.72 -0.46 0.46 3.72 -3.72 0.46zM491.1 373.2l3.72 -0.46 0.46 3.72 -3.72 0.46zM494.6 372.7l3.72 -0.46 0.46 3.72 -3.72 0.46zM498.2 372.3l3.72 -0.46 0.46 3.72 -3.72 0.46zM501.8 371.8l3.72 -0.46 0.46 3.72 -3.72 0.46zM505.4 371.4l3.72 -0.46 0.46 3.72 -3.72 0.46zM508.9 371.0l3.72 -0.46 0.46 3.72 -3.72 0.46zM512.5 370.5l3.72 -0.46 0.46 3.72 -3.72 0.46zM516.1 370.1l3.72 -0.46 0.46 3.72 -3.72 0.46zM523.2 369.2l3.72 -0.46 0.46 3.72 -3.72 0.46zM526.8 368.8l3.72 -0.46 0.46 3.72 -3.72 0.46zM530.4 368.3l3.72 -0.46 0.46 3.72 -3.72 0.46zM534.0 367.9l3.72 -0.46 0.46 3.72 -3.72 0.46zM537.5 367.4l3.72 -0.46 0.46 3.72 -3.72 0.46zM541.1 367.0l3.72 -0.46 0.46 3.72 -3.72 0.46zM544.7 366.6l3.72 -0.46 0.46 3.72 -3.72 0.46zM548.2 366.1l3.72 -0.46 0.46 3.72 -3.72 0.46zM551.8 365.7l3.72 -0.46 0.46 3.72 -3.72 0.46zM555.4 365.3l3.72 -0.46 0.46 3.72 -3.72 0.46zM559.0 364.8l3.72 -0.46 0.46 3.72 -3.72 0.46zM562.5 364.4l3.72 -0.46 0.46 3.72 -3.72 0.46zM566.1 363.9l3.72 -0.46 0.46 3.72 -3.72 0.46zM569.7 363.5l3.72 -0.46 0.46 3.72 -3.72 0.46zM573.3 363.1l3.72 -0.46 0.46 3.72 -3.72 0.46zM576.8 362.6l3.72 -0.46 0.46 3.72 -3.72 0.46zM580.4 362.2l3.72 -0.46 0.46 3.72 -3.72 0.46zM584.0 361.7l3.72 -0.46 0.46 3.72 -3.72 0.46zM587.6 361.3l3.72 -0.46 0.46 3.72 -3.72 0.46zM591.1 360.9l3.72 -0.46 0.46 3.72 -3.72 0.46zM594.7 360.4l3.72 -0.46 0.46 3.72 -3.72 0.46zM598.3 360.0l3.72 -0.46 0.46 3.72 -3.72 0.46zM601.8 359.6l3.72 -0.46 0.46 3.72 -3.72 0.46zM605.4 359.1l3.72 -0.46 0.46 3.72 -3.72 0.46zM423.6 385.1l3.72 -0.46 0.46 3.72 -3.72 0.46zM427.2 384.6l3.72 -0.46 0.46 3.72 -3.72 0.46zM430.8 384.2l3.72 -0.46 0.46 3.72 -3.72 0.46zM437.9 383.3l3.72 -0.46 0.46 3.72 -3.72 0.46zM441.5 382.9l3.72 -0.46 0.46 3.72 -3.72 0.46zM445.1 382.4l3.72 -0.46 0.46 3.72 -3.72 0.46zM455.8 381.1l3.72 -0.46 0.46 3.72 -3.72 0.46zM459.4 380.7l3.72 -0.46 0.46 3.72 -3.72 0.46zM466.5 379.8l3.72 -0.46 0.46 3.72 -3.72 0.46zM470.1 379.4l3.72 -0.46 0.46 3.72 -3.72 0.46zM473.6 378.9l3.72 -0.46 0.46 3.72 -3.72 0.46zM477.2 378.5l3.72 -0.46 0.46 3.72 -3.72 0.46zM480.8 378.0l3.72 -0.46 0.46 3.72 -3.72 0.46zM484.4 377.6l3.72 -0.46 0.46 3.72 -3.72 0.46zM487.9 377.2l3.72 -0.46 0.46 3.72 -3.72 0.46zM491.5 376.7l3.72 -0.46 0.46 3.72 -3.72 0.46zM495.1 376.3l3.72 -0.46 0.46 3.72 -3.72 0.46zM498.7 375.8l3.72 -0.46 0.46 3.72 -3.72 0.46zM502.2 375.4l3.72 -0.46 0.46 3.72 -3.72 0.46zM505.8 375.0l3.72 -0.46 0.46 3.72 -3.72 0.46zM509.4 374.5l3.72 -0.46 0.46 3.72 -3.72 0.46zM513.0 374.1l3.72 -0.46 0.46 3.72 -3.72 0.46zM516.5 373.7l3.72 -0.46 0.46 3.72 -3.72 0.46zM520.1 373.2l3.72 -0.46 0.46 3.72 -3.72 0.46zM523.7 372.8l3.72 -0.46 0.46 3.72 -3.72 0.46zM527.2 372.3l3.72 -0.46 0.46 3.72 -3.72 0.46zM530.8 371.9l3.72 -0.46 0.46 3.72 -3.72 0.46zM534.4 371.5l3.72 -0.46 0.46 3.72 -3.72 0.46zM538.0 371.0l3.72 -0.46 0.46 3.72 -3.72 0.46zM541.5 370.6l3.72 -0.46 0.46 3.72 -3.72 0.46zM545.1 370.1l3.72 -0.46 0.46 3.72 -3.72 0.46zM548.7 369.7l3.72 -0.46 0.46 3.72 -3.72 0.46zM552.3 369.3l3.72 -0.46 0.46 3.72 -3.72 0.46zM555.8 368.8l3.72 -0.46 0.46 3.72 -3.72 0.46zM559.4 368.4l3.72 -0.46 0.46 3.72 -3.72 0.46zM563.0 368.0l3.72 -0.46 0.46 3.72 -3.72 0.46zM566.6 367.5l3.72 -0.46 0.46 3.72 -3.72 0.46zM570.1 367.1l3.72 -0.46 0.46 3.72 -3.72 0.46zM573.7 366.6l3.72 -0.46 0.46 3.72 -3.72 0.46zM577.3 366.2l3.72 -0.46 0.46 3.72 -3.72 0.46zM580.8 365.8l3.72 -0.46 0.46 3.72 -3.72 0.46zM584.4 365.3l3.72 -0.46 0.46 3.72 -3.72 0.46zM588.0 364.9l3.72 -0.46 0.46 3.72 -3.72 0.46zM591.6 364.4l3.72 -0.46 0.46 3.72 -3.72 0.46zM595.1 364.0l3.72 -0.46 0.46 3.72 -3.72 0.46zM598.7 363.6l3.72 -0.46 0.46 3.72 -3.72 0.46zM438.4 386.9l3.72 -0.46 0.46 3.72 -3.72 0.46zM445.5 386.0l3.72 -0.46 0.46 3.72 -3.72 0.46zM449.1 385.6l3.72 -0.46 0.46 3.72 -3.72 0.46zM452.6 385.1l3.72 -0.46 0.46 3.72 -3.72 0.46zM463.4 383.8l3.72 -0.46 0.46 3.72 -3.72 0.46zM466.9 383.4l3.72 -0.46 0.46 3.72 -3.72 0.46zM470.5 382.9l3.72 -0.46 0.46 3.72 -3.72 0.46zM477.7 382.1l3.72 -0.46 0.46 3.72 -3.72 0.46zM481.2 381.6l3.72 -0.46 0.46 3.72 -3.72 0.46zM484.8 381.2l3.72 -0.46 0.46 3.72 -3.72 0.46zM488.4 380.7l3.72 -0.46 0.46 3.72 -3.72 0.46zM499.1 379.4l3.72 -0.46 0.46 3.72 -3.72 0.46zM502.7 379.0l3.72 -0.46 0.46 3.72 -3.72 0.46zM506.2 378.5l3.72 -0.46 0.46 3.72 -3.72 0.46zM509.8 378.1l3.72 -0.46 0.46 3.72 -3.72 0.46zM513.4 377.7l3.72 -0.46 0.46 3.72 -3.72 0.46zM517.0 377.2l3.72 -0.46 0.46 3.72 -3.72 0.46zM520.5 376.8l3.72 -0.46 0.46 3.72 -3.72 0.46zM524.1 376.3l3.72 -0.46 0.46 3.72 -3.72 0.46zM527.7 375.9l3.72 -0.46 0.46 3.72 -3.72 0.46zM531.3 375.5l3.72 -0.46 0.46 3.72 -3.72 0.46zM534.8 375.0l3.72 -0.46 0.46 3.72 -3.72 0.46zM538.4 374.6l3.72 -0.46 0.46 3.72 -3.72 0.46zM542.0 374.2l3.72 -0.46 0.46 3.72 -3.72 0.46zM545.6 373.7l3.72 -0.46 0.46 3.72 -3.72 0.46zM549.1 373.3l3.72 -0.46 0.46 3.72 -3.72 0.46zM552.7 372.8l3.72 -0.46 0.46 3.72 -3.72 0.46zM556.3 372.4l3.72 -0.46 0.46 3.72 -3.72 0.46zM559.8 372.0l3.72 -0.46 0.46 3.72 -3.72 0.46zM563.4 371.5l3.72 -0.46 0.46 3.72 -3.72 0.46zM567.0 371.1l3.72 -0.46 0.46 3.72 -3.72 0.46zM570.6 370.6l3.72 -0.46 0.46 3.72 -3.72 0.46zM574.1 370.2l3.72 -0.46 0.46 3.72 -3.72 0.46zM577.7 369.8l3.72 -0.46 0.46 3.72 -3.72 0.46zM581.3 369.3l3.72 -0.46 0.46 3.72 -3.72 0.46zM584.9 368.9l3.72 -0.46 0.46 3.72 -3.72 0.46zM592.0 368.0l3.72 -0.46 0.46 3.72 -3.72 0.46zM595.6 367.6l3.72 -0.46 0.46 3.72 -3.72 0.46zM445.9 389.6l3.72 -0.46 0.46 3.72 -3.72 0.46zM449.5 389.1l3.72 -0.46 0.46 3.72 -3.72 0.46zM453.1 388.7l3.72 -0.46 0.46 3.72 -3.72 0.46zM456.7 388.3l3.72 -0.46 0.46 3.72 -3.72 0.46zM460.2 387.8l3.72 -0.46 0.46 3.72 -3.72 0.46zM463.8 387.4l3.72 -0.46 0.46 3.72 -3.72 0.46zM467.4 386.9l3.72 -0.46 0.46 3.72 -3.72 0.46zM471.0 386.5l3.72 -0.46 0.46 3.72 -3.72 0.46zM474.5 386.1l3.72 -0.46 0.46 3.72 -3.72 0.46zM478.1 385.6l3.72 -0.46 0.46 3.72 -3.72 0.46zM481.7 385.2l3.72 -0.46 0.46 3.72 -3.72 0.46zM485.2 384.7l3.72 -0.46 0.46 3.72 -3.72 0.46zM492.4 383.9l3.72 -0.46 0.46 3.72 -3.72 0.46zM496.0 383.4l3.72 -0.46 0.46 3.72 -3.72 0.46zM499.5 383.0l3.72 -0.46 0.46 3.72 -3.72 0.46zM503.1 382.6l3.72 -0.46 0.46 3.72 -3.72 0.46zM506.7 382.1l3.72 -0.46 0.46 3.72 -3.72 0.46zM510.3 381.7l3.72 -0.46 0.46 3.72 -3.72 0.46zM513.8 381.2l3.72 -0.46 0.46 3.72 -3.72 0.46zM517.4 380.8l3.72 -0.46 0.46 3.72 -3.72 0.46zM521.0 380.4l3.72 -0.46 0.46 3.72 -3.72 0.46zM524.6 379.9l3.72 -0.46 0.46 3.72 -3.72 0.46zM528.1 379.5l3.72 -0.46 0.46 3.72 -3.72 0.46zM531.7 379.0l3.72 -0.46 0.46 3.72 -3.72 0.46zM535.3 378.6l3.72 -0.46 0.46 3.72 -3.72 0.46zM538.8 378.2l3.72 -0.46 0.46 3.72 -3.72 0.46zM542.4 377.7l3.72 -0.46 0.46 3.72 -3.72 0.46zM546.0 377.3l3.72 -0.46 0.46 3.72 -3.72 0.46zM549.6 376.9l3.72 -0.46 0.46 3.72 -3.72 0.46zM553.1 376.4l3.72 -0.46 0.46 3.72 -3.72 0.46zM556.7 376.0l3.72 -0.46 0.46 3.72 -3.72 0.46zM560.3 375.5l3.72 -0.46 0.46 3.72 -3.72 0.46zM563.9 375.1l3.72 -0.46 0.46 3.72 -3.72 0.46zM567.4 374.7l3.72 -0.46 0.46 3.72 -3.72 0.46zM571.0 374.2l3.72 -0.46 0.46 3.72 -3.72 0.46zM574.6 373.8l3.72 -0.46 0.46 3.72 -3.72 0.46zM578.1 373.3l3.72 -0.46 0.46 3.72 -3.72 0.46zM581.7 372.9l3.72 -0.46 0.46 3.72 -3.72 0.46zM585.3 372.5l3.72 -0.46 0.46 3.72 -3.72 0.46zM588.9 372.0l3.72 -0.46 0.46 3.72 -3.72 0.46zM460.7 391.4l3.72 -0.46 0.46 3.72 -3.72 0.46zM464.2 391.0l3.72 -0.46 0.46 3.72 -3.72 0.46zM467.8 390.5l3.72 -0.46 0.46 3.72 -3.72 0.46zM475.0 389.6l3.72 -0.46 0.46 3.72 -3.72 0.46zM478.5 389.2l3.72 -0.46 0.46 3.72 -3.72 0.46zM482.1 388.8l3.72 -0.46 0.46 3.72 -3.72 0.46zM485.7 388.3l3.72 -0.46 0.46 3.72 -3.72 0.46zM489.3 387.9l3.72 -0.46 0.46 3.72 -3.72 0.46zM496.4 387.0l3.72 -0.46 0.46 3.72 -3.72 0.46zM500.0 386.6l3.72 -0.46 0.46 3.72 -3.72 0.46zM503.6 386.1l3.72 -0.46 0.46 3.72 -3.72 0.46zM507.1 385.7l3.72 -0.46 0.46 3.72 -3.72 0.46zM510.7 385.3l3.72 -0.46 0.46 3.72 -3.72 0.46zM514.3 384.8l3.72 -0.46 0.46 3.72 -3.72 0.46zM521.4 383.9l3.72 -0.46 0.46 3.72 -3.72 0.46zM525.0 383.5l3.72 -0.46 0.46 3.72 -3.72 0.46zM528.6 383.1l3.72 -0.46 0.46 3.72 -3.72 0.46zM532.1 382.6l3.72 -0.46 0.46 3.72 -3.72 0.46zM535.7 382.2l3.72 -0.46 0.46 3.72 -3.72 0.46zM539.3 381.7l3.72 -0.46 0.46 3.72 -3.72 0.46zM542.9 381.3l3.72 -0.46 0.46 3.72 -3.72 0.46zM546.4 380.9l3.72 -0.46 0.46 3.72 -3.72 0.46zM550.0 380.4l3.72 -0.46 0.46 3.72 -3.72 0.46zM553.6 380.0l3.72 -0.46 0.46 3.72 -3.72 0.46zM560.7 379.1l3.72 -0.46 0.46 3.72 -3.72 0.46zM564.3 378.7l3.72 -0.46 0.46 3.72 -3.72 0.46zM567.9 378.2l3.72 -0.46 0.46 3.72 -3.72 0.46zM571.4 377.8l3.72 -0.46 0.46 3.72 -3.72 0.46zM575.0 377.4l3.72 -0.46 0.46 3.72 -3.72 0.46zM578.6 376.9l3.72 -0.46 0.46 3.72 -3.72 0.46zM582.2 376.5l3.72 -0.46 0.46 3.72 -3.72 0.46zM585.7 376.0l3.72 -0.46 0.46 3.72 -3.72 0.46zM457.5 395.4l3.72 -0.46 0.46 3.72 -3.72 0.46zM461.1 395.0l3.72 -0.46 0.46 3.72 -3.72 0.46zM464.7 394.5l3.72 -0.46 0.46 3.72 -3.72 0.46zM468.3 394.1l3.72 -0.46 0.46 3.72 -3.72 0.46zM475.4 393.2l3.72 -0.46 0.46 3.72 -3.72 0.46zM479.0 392.8l3.72 -0.46 0.46 3.72 -3.72 0.46zM482.6 392.3l3.72 -0.46 0.46 3.72 -3.72 0.46zM486.1 391.9l3.72 -0.46 0.46 3.72 -3.72 0.46zM493.3 391.0l3.72 -0.46 0.46 3.72 -3.72 0.46zM496.8 390.6l3.72 -0.46 0.46 3.72 -3.72 0.46zM500.4 390.1l3.72 -0.46 0.46 3.72 -3.72 0.46zM504.0 389.7l3.72 -0.46 0.46 3.72 -3.72 0.46zM507.6 389.3l3.72 -0.46 0.46 3.72 -3.72 0.46zM511.1 388.8l3.72 -0.46 0.46 3.72 -3.72 0.46zM514.7 388.4l3.72 -0.46 0.46 3.72 -3.72 0.46zM518.3 387.9l3.72 -0.46 0.46 3.72 -3.72 0.46zM521.9 387.5l3.72 -0.46 0.46 3.72 -3.72 0.46zM525.4 387.1l3.72 -0.46 0.46 3.72 -3.72 0.46zM529.0 386.6l3.72 -0.46 0.46 3.72 -3.72 0.46zM532.6 386.2l3.72 -0.46 0.46 3.72 -3.72 0.46zM536.1 385.8l3.72 -0.46 0.46 3.72 -3.72 0.46zM539.7 385.3l3.72 -0.46 0.46 3.72 -3.72 0.46zM543.3 384.9l3.72 -0.46 0.46 3.72 -3.72 0.46zM546.9 384.4l3.72 -0.46 0.46 3.72 -3.72 0.46zM550.4 384.0l3.72 -0.46 0.46 3.72 -3.72 0.46zM554.0 383.6l3.72 -0.46 0.46 3.72 -3.72 0.46zM557.6 383.1l3.72 -0.46 0.46 3.72 -3.72 0.46zM561.2 382.7l3.72 -0.46 0.46 3.72 -3.72 0.46zM564.7 382.2l3.72 -0.46 0.46 3.72 -3.72 0.46zM568.3 381.8l3.72 -0.46 0.46 3.72 -3.72 0.46zM571.9 381.4l3.72 -0.46 0.46 3.72 -3.72 0.46zM575.5 380.9l3.72 -0.46 0.46 3.72 -3.72 0.46zM579.0 380.5l3.72 -0.46 0.46 3.72 -3.72 0.46zM461.6 398.5l3.72 -0.46 0.46 3.72 -3.72 0.46zM465.1 398.1l3.72 -0.46 0.46 3.72 -3.72 0.46zM468.7 397.7l3.72 -0.46 0.46 3.72 -3.72 0.46zM472.3 397.2l3.72 -0.46 0.46 3.72 -3.72 0.46zM475.8 396.8l3.72 -0.46 0.46 3.72 -3.72 0.46zM479.4 396.3l3.72 -0.46 0.46 3.72 -3.72 0.46zM483.0 395.9l3.72 -0.46 0.46 3.72 -3.72 0.46zM486.6 395.5l3.72 -0.46 0.46 3.72 -3.72 0.46zM490.1 395.0l3.72 -0.46 0.46 3.72 -3.72 0.46zM493.7 394.6l3.72 -0.46 0.46 3.72 -3.72 0.46zM497.3 394.2l3.72 -0.46 0.46 3.72 -3.72 0.46zM500.9 393.7l3.72 -0.46 0.46 3.72 -3.72 0.46zM504.4 393.3l3.72 -0.46 0.46 3.72 -3.72 0.46zM508.0 392.8l3.72 -0.46 0.46 3.72 -3.72 0.46zM511.6 392.4l3.72 -0.46 0.46 3.72 -3.72 0.46zM515.1 392.0l3.72 -0.46 0.46 3.72 -3.72 0.46zM518.7 391.5l3.72 -0.46 0.46 3.72 -3.72 0.46zM522.3 391.1l3.72 -0.46 0.46 3.72 -3.72 0.46zM525.9 390.6l3.72 -0.46 0.46 3.72 -3.72 0.46zM529.4 390.2l3.72 -0.46 0.46 3.72 -3.72 0.46zM533.0 389.8l3.72 -0.46 0.46 3.72 -3.72 0.46zM536.6 389.3l3.72 -0.46 0.46 3.72 -3.72 0.46zM540.2 388.9l3.72 -0.46 0.46 3.72 -3.72 0.46zM543.7 388.4l3.72 -0.46 0.46 3.72 -3.72 0.46zM547.3 388.0l3.72 -0.46 0.46 3.72 -3.72 0.46zM550.9 387.6l3.72 -0.46 0.46 3.72 -3.72 0.46zM554.5 387.1l3.72 -0.46 0.46 3.72 -3.72 0.46zM558.0 386.7l3.72 -0.46 0.46 3.72 -3.72 0.46zM561.6 386.3l3.72 -0.46 0.46 3.72 -3.72 0.46zM565.2 385.8l3.72 -0.46 0.46 3.72 -3.72 0.46zM568.7 385.4l3.72 -0.46 0.46 3.72 -3.72 0.46zM572.3 384.9l3.72 -0.46 0.46 3.72 -3.72 0.46zM575.9 384.5l3.72 -0.46 0.46 3.72 -3.72 0.46zM579.5 384.1l3.72 -0.46 0.46 3.72 -3.72 0.46zM462.0 402.1l3.72 -0.46 0.46 3.72 -3.72 0.46zM469.1 401.2l3.72 -0.46 0.46 3.72 -3.72 0.46zM472.7 400.8l3.72 -0.46 0.46 3.72 -3.72 0.46zM476.3 400.4l3.72 -0.46 0.46 3.72 -3.72 0.46zM479.9 399.9l3.72 -0.46 0.46 3.72 -3.72 0.46zM483.4 399.5l3.72 -0.46 0.46 3.72 -3.72 0.46zM487.0 399.0l3.72 -0.46 0.46 3.72 -3.72 0.46zM490.6 398.6l3.72 -0.46 0.46 3.72 -3.72 0.46zM494.1 398.2l3.72 -0.46 0.46 3.72 -3.72 0.46zM497.7 397.7l3.72 -0.46 0.46 3.72 -3.72 0.46zM501.3 397.3l3.72 -0.46 0.46 3.72 -3.72 0.46zM504.9 396.8l3.72 -0.46 0.46 3.72 -3.72 0.46zM508.4 396.4l3.72 -0.46 0.46 3.72 -3.72 0.46zM512.0 396.0l3.72 -0.46 0.46 3.72 -3.72 0.46zM515.6 395.5l3.72 -0.46 0.46 3.72 -3.72 0.46zM519.2 395.1l3.72 -0.46 0.46 3.72 -3.72 0.46zM522.7 394.7l3.72 -0.46 0.46 3.72 -3.72 0.46zM526.3 394.2l3.72 -0.46 0.46 3.72 -3.72 0.46zM529.9 393.8l3.72 -0.46 0.46 3.72 -3.72 0.46zM533.5 393.3l3.72 -0.46 0.46 3.72 -3.72 0.46zM537.0 392.9l3.72 -0.46 0.46 3.72 -3.72 0.46zM540.6 392.5l3.72 -0.46 0.46 3.72 -3.72 0.46zM544.2 392.0l3.72 -0.46 0.46 3.72 -3.72 0.46zM547.7 391.6l3.72 -0.46 0.46 3.72 -3.72 0.46zM551.3 391.1l3.72 -0.46 0.46 3.72 -3.72 0.46zM554.9 390.7l3.72 -0.46 0.46 3.72 -3.72 0.46zM558.5 390.3l3.72 -0.46 0.46 3.72 -3.72 0.46zM562.0 389.8l3.72 -0.46 0.46 3.72 -3.72 0.46zM565.6 389.4l3.72 -0.46 0.46 3.72 -3.72 0.46zM569.2 389.0l3.72 -0.46 0.46 3.72 -3.72 0.46zM572.8 388.5l3.72 -0.46 0.46 3.72 -3.72 0.46zM576.3 388.1l3.72 -0.46 0.46 3.72 -3.72 0.46zM444.6 407.9l3.72 -0.46 0.46 3.72 -3.72 0.46zM448.1 407.4l3.72 -0.46 0.46 3.72 -3.72 0.46zM451.7 407.0l3.72 -0.46 0.46 3.72 -3.72 0.46zM455.3 406.6l3.72 -0.46 0.46 3.72 -3.72 0.46zM458.9 406.1l3.72 -0.46 0.46 3.72 -3.72 0.46zM462.4 405.7l3.72 -0.46 0.46 3.72 -3.72 0.46zM466.0 405.2l3.72 -0.46 0.46 3.72 -3.72 0.46zM469.6 404.8l3.72 -0.46 0.46 3.72 -3.72 0.46zM473.1 404.4l3.72 -0.46 0.46 3.72 -3.72 0.46zM476.7 403.9l3.72 -0.46 0.46 3.72 -3.72 0.46zM480.3 403.5l3.72 -0.46 0.46 3.72 -3.72 0.46zM483.9 403.1l3.72 -0.46 0.46 3.72 -3.72 0.46zM487.4 402.6l3.72 -0.46 0.46 3.72 -3.72 0.46zM491.0 402.2l3.72 -0.46 0.46 3.72 -3.72 0.46zM494.6 401.7l3.72 -0.46 0.46 3.72 -3.72 0.46zM498.2 401.3l3.72 -0.46 0.46 3.72 -3.72 0.46zM501.7 400.9l3.72 -0.46 0.46 3.72 -3.72 0.46zM505.3 400.4l3.72 -0.46 0.46 3.72 -3.72 0.46zM508.9 400.0l3.72 -0.46 0.46 3.72 -3.72 0.46zM512.5 399.5l3.72 -0.46 0.46 3.72 -3.72 0.46zM516.0 399.1l3.72 -0.46 0.46 3.72 -3.72 0.46zM519.6 398.7l3.72 -0.46 0.46 3.72 -3.72 0.46zM523.2 398.2l3.72 -0.46 0.46 3.72 -3.72 0.46zM526.7 397.8l3.72 -0.46 0.46 3.72 -3.72 0.46zM530.3 397.3l3.72 -0.46 0.46 3.72 -3.72 0.46zM537.5 396.5l3.72 -0.46 0.46 3.72 -3.72 0.46zM541.0 396.0l3.72 -0.46 0.46 3.72 -3.72 0.46zM544.6 395.6l3.72 -0.46 0.46 3.72 -3.72 0.46zM548.2 395.2l3.72 -0.46 0.46 3.72 -3.72 0.46zM551.8 394.7l3.72 -0.46 0.46 3.72 -3.72 0.46zM555.3 394.3l3.72 -0.46 0.46 3.72 -3.72 0.46zM562.5 393.4l3.72 -0.46 0.46 3.72 -3.72 0.46zM566.0 393.0l3.72 -0.46 0.46 3.72 -3.72 0.46zM569.6 392.5l3.72 -0.46 0.46 3.72 -3.72 0.46zM573.2 392.1l3.72 -0.46 0.46 3.72 -3.72 0.46zM576.8 391.6l3.72 -0.46 0.46 3.72 -3.72 0.46zM448.6 411.0l3.72 -0.46 0.46 3.72 -3.72 0.46zM452.1 410.6l3.72 -0.46 0.46 3.72 -3.72 0.46zM459.3 409.7l3.72 -0.46 0.46 3.72 -3.72 0.46zM462.9 409.3l3.72 -0.46 0.46 3.72 -3.72 0.46zM466.4 408.8l3.72 -0.46 0.46 3.72 -3.72 0.46zM470.0 408.4l3.72 -0.46 0.46 3.72 -3.72 0.46zM473.6 407.9l3.72 -0.46 0.46 3.72 -3.72 0.46zM477.2 407.5l3.72 -0.46 0.46 3.72 -3.72 0.46zM480.7 407.1l3.72 -0.46 0.46 3.72 -3.72 0.46zM484.3 406.6l3.72 -0.46 0.46 3.72 -3.72 0.46zM487.9 406.2l3.72 -0.46 0.46 3.72 -3.72 0.46zM491.5 405.7l3.72 -0.46 0.46 3.72 -3.72 0.46zM495.0 405.3l3.72 -0.46 0.46 3.72 -3.72 0.46zM498.6 404.9l3.72 -0.46 0.46 3.72 -3.72 0.46zM502.2 404.4l3.72 -0.46 0.46 3.72 -3.72 0.46zM505.7 404.0l3.72 -0.46 0.46 3.72 -3.72 0.46zM509.3 403.6l3.72 -0.46 0.46 3.72 -3.72 0.46zM512.9 403.1l3.72 -0.46 0.46 3.72 -3.72 0.46zM516.5 402.7l3.72 -0.46 0.46 3.72 -3.72 0.46zM520.0 402.2l3.72 -0.46 0.46 3.72 -3.72 0.46zM523.6 401.8l3.72 -0.46 0.46 3.72 -3.72 0.46zM527.2 401.4l3.72 -0.46 0.46 3.72 -3.72 0.46zM534.3 400.5l3.72 -0.46 0.46 3.72 -3.72 0.46zM537.9 400.0l3.72 -0.46 0.46 3.72 -3.72 0.46zM541.5 399.6l3.72 -0.46 0.46 3.72 -3.72 0.46zM545.0 399.2l3.72 -0.46 0.46 3.72 -3.72 0.46zM548.6 398.7l3.72 -0.46 0.46 3.72 -3.72 0.46zM552.2 398.3l3.72 -0.46 0.46 3.72 -3.72 0.46zM555.8 397.9l3.72 -0.46 0.46 3.72 -3.72 0.46zM559.3 397.4l3.72 -0.46 0.46 3.72 -3.72 0.46zM562.9 397.0l3.72 -0.46 0.46 3.72 -3.72 0.46zM566.5 396.5l3.72 -0.46 0.46 3.72 -3.72 0.46zM570.1 396.1l3.72 -0.46 0.46 3.72 -3.72 0.46zM573.6 395.7l3.72 -0.46 0.46 3.72 -3.72 0.46zM577.2 395.2l3.72 -0.46 0.46 3.72 -3.72 0.46zM424.0 417.7l3.72 -0.46 0.46 3.72 -3.72 0.46zM434.7 416.3l3.72 -0.46 0.46 3.72 -3.72 0.46zM452.6 414.1l3.72 -0.46 0.46 3.72 -3.72 0.46zM456.2 413.7l3.72 -0.46 0.46 3.72 -3.72 0.46zM459.7 413.3l3.72 -0.46 0.46 3.72 -3.72 0.46zM463.3 412.8l3.72 -0.46 0.46 3.72 -3.72 0.46zM470.5 412.0l3.72 -0.46 0.46 3.72 -3.72 0.46zM477.6 411.1l3.72 -0.46 0.46 3.72 -3.72 0.46zM481.2 410.6l3.72 -0.46 0.46 3.72 -3.72 0.46zM484.7 410.2l3.72 -0.46 0.46 3.72 -3.72 0.46zM491.9 409.3l3.72 -0.46 0.46 3.72 -3.72 0.46zM495.5 408.9l3.72 -0.46 0.46 3.72 -3.72 0.46zM499.0 408.4l3.72 -0.46 0.46 3.72 -3.72 0.46zM502.6 408.0l3.72 -0.46 0.46 3.72 -3.72 0.46zM506.2 407.6l3.72 -0.46 0.46 3.72 -3.72 0.46zM509.8 407.1l3.72 -0.46 0.46 3.72 -3.72 0.46zM513.3 406.7l3.72 -0.46 0.46 3.72 -3.72 0.46zM516.9 406.3l3.72 -0.46 0.46 3.72 -3.72 0.46zM520.5 405.8l3.72 -0.46 0.46 3.72 -3.72 0.46zM524.0 405.4l3.72 -0.46 0.46 3.72 -3.72 0.46zM527.6 404.9l3.72 -0.46 0.46 3.72 -3.72 0.46zM531.2 404.5l3.72 -0.46 0.46 3.72 -3.72 0.46zM534.8 404.1l3.72 -0.46 0.46 3.72 -3.72 0.46zM538.3 403.6l3.72 -0.46 0.46 3.72 -3.72 0.46zM541.9 403.2l3.72 -0.46 0.46 3.72 -3.72 0.46zM545.5 402.7l3.72 -0.46 0.46 3.72 -3.72 0.46zM549.1 402.3l3.72 -0.46 0.46 3.72 -3.72 0.46zM552.6 401.9l3.72 -0.46 0.46 3.72 -3.72 0.46zM556.2 401.4l3.72 -0.46 0.46 3.72 -3.72 0.46zM559.8 401.0l3.72 -0.46 0.46 3.72 -3.72 0.46zM563.4 400.5l3.72 -0.46 0.46 3.72 -3.72 0.46zM566.9 400.1l3.72 -0.46 0.46 3.72 -3.72 0.46zM570.5 399.7l3.72 -0.46 0.46 3.72 -3.72 0.46zM574.1 399.2l3.72 -0.46 0.46 3.72 -3.72 0.46zM577.6 398.8l3.72 -0.46 0.46 3.72 -3.72 0.46zM581.2 398.4l3.72 -0.46 0.46 3.72 -3.72 0.46zM460.2 416.8l3.72 -0.46 0.46 3.72 -3.72 0.46zM463.7 416.4l3.72 -0.46 0.46 3.72 -3.72 0.46zM470.9 415.5l3.72 -0.46 0.46 3.72 -3.72 0.46zM474.5 415.1l3.72 -0.46 0.46 3.72 -3.72 0.46zM478.0 414.7l3.72 -0.46 0.46 3.72 -3.72 0.46zM481.6 414.2l3.72 -0.46 0.46 3.72 -3.72 0.46zM485.2 413.8l3.72 -0.46 0.46 3.72 -3.72 0.46zM488.8 413.3l3.72 -0.46 0.46 3.72 -3.72 0.46zM492.3 412.9l3.72 -0.46 0.46 3.72 -3.72 0.46zM499.5 412.0l3.72 -0.46 0.46 3.72 -3.72 0.46zM503.0 411.6l3.72 -0.46 0.46 3.72 -3.72 0.46zM506.6 411.1l3.72 -0.46 0.46 3.72 -3.72 0.46zM510.2 410.7l3.72 -0.46 0.46 3.72 -3.72 0.46zM513.8 410.3l3.72 -0.46 0.46 3.72 -3.72 0.46zM517.3 409.8l3.72 -0.46 0.46 3.72 -3.72 0.46zM520.9 409.4l3.72 -0.46 0.46 3.72 -3.72 0.46zM524.5 408.9l3.72 -0.46 0.46 3.72 -3.72 0.46zM528.1 408.5l3.72 -0.46 0.46 3.72 -3.72 0.46zM531.6 408.1l3.72 -0.46 0.46 3.72 -3.72 0.46zM535.2 407.6l3.72 -0.46 0.46 3.72 -3.72 0.46zM538.8 407.2l3.72 -0.46 0.46 3.72 -3.72 0.46zM542.4 406.8l3.72 -0.46 0.46 3.72 -3.72 0.46zM545.9 406.3l3.72 -0.46 0.46 3.72 -3.72 0.46zM549.5 405.9l3.72 -0.46 0.46 3.72 -3.72 0.46zM553.1 405.4l3.72 -0.46 0.46 3.72 -3.72 0.46zM556.6 405.0l3.72 -0.46 0.46 3.72 -3.72 0.46zM560.2 404.6l3.72 -0.46 0.46 3.72 -3.72 0.46zM563.8 404.1l3.72 -0.46 0.46 3.72 -3.72 0.46zM567.4 403.7l3.72 -0.46 0.46 3.72 -3.72 0.46zM570.9 403.2l3.72 -0.46 0.46 3.72 -3.72 0.46zM574.5 402.8l3.72 -0.46 0.46 3.72 -3.72 0.46zM471.3 419.1l3.72 -0.46 0.46 3.72 -3.72 0.46zM474.9 418.7l3.72 -0.46 0.46 3.72 -3.72 0.46zM478.5 418.2l3.72 -0.46 0.46 3.72 -3.72 0.46zM482.0 417.8l3.72 -0.46 0.46 3.72 -3.72 0.46zM485.6 417.3l3.72 -0.46 0.46 3.72 -3.72 0.46zM489.2 416.9l3.72 -0.46 0.46 3.72 -3.72 0.46zM492.8 416.5l3.72 -0.46 0.46 3.72 -3.72 0.46zM496.3 416.0l3.72 -0.46 0.46 3.72 -3.72 0.46zM499.9 415.6l3.72 -0.46 0.46 3.72 -3.72 0.46zM503.5 415.2l3.72 -0.46 0.46 3.72 -3.72 0.46zM507.1 414.7l3.72 -0.46 0.46 3.72 -3.72 0.46zM510.6 414.3l3.72 -0.46 0.46 3.72 -3.72 0.46zM514.2 413.8l3.72 -0.46 0.46 3.72 -3.72 0.46zM517.8 413.4l3.72 -0.46 0.46 3.72 -3.72 0.46zM521.4 413.0l3.72 -0.46 0.46 3.72 -3.72 0.46zM524.9 412.5l3.72 -0.46 0.46 3.72 -3.72 0.46zM528.5 412.1l3.72 -0.46 0.46 3.72 -3.72 0.46zM532.1 411.6l3.72 -0.46 0.46 3.72 -3.72 0.46zM535.6 411.2l3.72 -0.46 0.46 3.72 -3.72 0.46zM539.2 410.8l3.72 -0.46 0.46 3.72 -3.72 0.46zM542.8 410.3l3.72 -0.46 0.46 3.72 -3.72 0.46zM546.4 409.9l3.72 -0.46 0.46 3.72 -3.72 0.46zM549.9 409.4l3.72 -0.46 0.46 3.72 -3.72 0.46zM553.5 409.0l3.72 -0.46 0.46 3.72 -3.72 0.46zM557.1 408.6l3.72 -0.46 0.46 3.72 -3.72 0.46zM560.7 408.1l3.72 -0.46 0.46 3.72 -3.72 0.46zM575.0 406.4l3.72 -0.46 0.46 3.72 -3.72 0.46zM607.1 402.4l3.72 -0.46 0.46 3.72 -3.72 0.46zM482.5 421.4l3.72 -0.46 0.46 3.72 -3.72 0.46zM486.1 420.9l3.72 -0.46 0.46 3.72 -3.72 0.46zM489.6 420.5l3.72 -0.46 0.46 3.72 -3.72 0.46zM493.2 420.0l3.72 -0.46 0.46 3.72 -3.72 0.46zM496.8 419.6l3.72 -0.46 0.46 3.72 -3.72 0.46zM500.4 419.2l3.72 -0.46 0.46 3.72 -3.72 0.46zM503.9 418.7l3.72 -0.46 0.46 3.72 -3.72 0.46zM507.5 418.3l3.72 -0.46 0.46 3.72 -3.72 0.46zM511.1 417.8l3.72 -0.46 0.46 3.72 -3.72 0.46zM514.6 417.4l3.72 -0.46 0.46 3.72 -3.72 0.46zM518.2 417.0l3.72 -0.46 0.46 3.72 -3.72 0.46zM521.8 416.5l3.72 -0.46 0.46 3.72 -3.72 0.46zM525.4 416.1l3.72 -0.46 0.46 3.72 -3.72 0.46zM528.9 415.7l3.72 -0.46 0.46 3.72 -3.72 0.46zM532.5 415.2l3.72 -0.46 0.46 3.72 -3.72 0.46zM536.1 414.8l3.72 -0.46 0.46 3.72 -3.72 0.46zM539.7 414.3l3.72 -0.46 0.46 3.72 -3.72 0.46zM543.2 413.9l3.72 -0.46 0.46 3.72 -3.72 0.46zM546.8 413.5l3.72 -0.46 0.46 3.72 -3.72 0.46zM550.4 413.0l3.72 -0.46 0.46 3.72 -3.72 0.46zM554.0 412.6l3.72 -0.46 0.46 3.72 -3.72 0.46zM557.5 412.1l3.72 -0.46 0.46 3.72 -3.72 0.46zM568.2 410.8l3.72 -0.46 0.46 3.72 -3.72 0.46zM579.0 409.5l3.72 -0.46 0.46 3.72 -3.72 0.46zM482.9 424.9l3.72 -0.46 0.46 3.72 -3.72 0.46zM486.5 424.5l3.72 -0.46 0.46 3.72 -3.72 0.46zM490.1 424.1l3.72 -0.46 0.46 3.72 -3.72 0.46zM493.6 423.6l3.72 -0.46 0.46 3.72 -3.72 0.46zM497.2 423.2l3.72 -0.46 0.46 3.72 -3.72 0.46zM500.8 422.7l3.72 -0.46 0.46 3.72 -3.72 0.46zM504.4 422.3l3.72 -0.46 0.46 3.72 -3.72 0.46zM507.9 421.9l3.72 -0.46 0.46 3.72 -3.72 0.46zM511.5 421.4l3.72 -0.46 0.46 3.72 -3.72 0.46zM515.1 421.0l3.72 -0.46 0.46 3.72 -3.72 0.46zM518.7 420.5l3.72 -0.46 0.46 3.72 -3.72 0.46zM522.2 420.1l3.72 -0.46 0.46 3.72 -3.72 0.46zM525.8 419.7l3.72 -0.46 0.46 3.72 -3.72 0.46zM540.1 417.9l3.72 -0.46 0.46 3.72 -3.72 0.46zM543.7 417.5l3.72 -0.46 0.46 3.72 -3.72 0.46zM547.2 417.0l3.72 -0.46 0.46 3.72 -3.72 0.46zM550.8 416.6l3.72 -0.46 0.46 3.72 -3.72 0.46zM558.0 415.7l3.72 -0.46 0.46 3.72 -3.72 0.46zM565.1 414.8l3.72 -0.46 0.46 3.72 -3.72 0.46zM572.3 414.0l3.72 -0.46 0.46 3.72 -3.72 0.46zM579.4 413.1l3.72 -0.46 0.46 3.72 -3.72 0.46zM454.8 432.0l3.72 -0.46 0.46 3.72 -3.72 0.46zM486.9 428.1l3.72 -0.46 0.46 3.72 -3.72 0.46zM490.5 427.6l3.72 -0.46 0.46 3.72 -3.72 0.46zM494.1 427.2l3.72 -0.46 0.46 3.72 -3.72 0.46zM497.7 426.7l3.72 -0.46 0.46 3.72 -3.72 0.46zM501.2 426.3l3.72 -0.46 0.46 3.72 -3.72 0.46zM504.8 425.9l3.72 -0.46 0.46 3.72 -3.72 0.46zM508.4 425.4l3.72 -0.46 0.46 3.72 -3.72 0.46zM511.9 425.0l3.72 -0.46 0.46 3.72 -3.72 0.46zM515.5 424.6l3.72 -0.46 0.46 3.72 -3.72 0.46zM519.1 424.1l3.72 -0.46 0.46 3.72 -3.72 0.46zM522.7 423.7l3.72 -0.46 0.46 3.72 -3.72 0.46zM526.2 423.2l3.72 -0.46 0.46 3.72 -3.72 0.46zM529.8 422.8l3.72 -0.46 0.46 3.72 -3.72 0.46zM533.4 422.4l3.72 -0.46 0.46 3.72 -3.72 0.46zM537.0 421.9l3.72 -0.46 0.46 3.72 -3.72 0.46zM540.5 421.5l3.72 -0.46 0.46 3.72 -3.72 0.46zM544.1 421.0l3.72 -0.46 0.46 3.72 -3.72 0.46zM547.7 420.6l3.72 -0.46 0.46 3.72 -3.72 0.46zM551.3 420.2l3.72 -0.46 0.46 3.72 -3.72 0.46zM554.8 419.7l3.72 -0.46 0.46 3.72 -3.72 0.46zM558.4 419.3l3.72 -0.46 0.46 3.72 -3.72 0.46zM569.1 418.0l3.72 -0.46 0.46 3.72 -3.72 0.46zM583.4 416.2l3.72 -0.46 0.46 3.72 -3.72 0.46zM587.0 415.8l3.72 -0.46 0.46 3.72 -3.72 0.46zM490.9 431.2l3.72 -0.46 0.46 3.72 -3.72 0.46zM494.5 430.8l3.72 -0.46 0.46 3.72 -3.72 0.46zM498.1 430.3l3.72 -0.46 0.46 3.72 -3.72 0.46zM501.7 429.9l3.72 -0.46 0.46 3.72 -3.72 0.46zM505.2 429.4l3.72 -0.46 0.46 3.72 -3.72 0.46zM508.8 429.0l3.72 -0.46 0.46 3.72 -3.72 0.46zM512.4 428.6l3.72 -0.46 0.46 3.72 -3.72 0.46zM516.0 428.1l3.72 -0.46 0.46 3.72 -3.72 0.46zM519.5 427.7l3.72 -0.46 0.46 3.72 -3.72 0.46zM523.1 427.3l3.72 -0.46 0.46 3.72 -3.72 0.46zM526.7 426.8l3.72 -0.46 0.46 3.72 -3.72 0.46zM530.3 426.4l3.72 -0.46 0.46 3.72 -3.72 0.46zM533.8 425.9l3.72 -0.46 0.46 3.72 -3.72 0.46zM537.4 425.5l3.72 -0.46 0.46 3.72 -3.72 0.46zM541.0 425.1l3.72 -0.46 0.46 3.72 -3.72 0.46zM544.5 424.6l3.72 -0.46 0.46 3.72 -3.72 0.46zM548.1 424.2l3.72 -0.46 0.46 3.72 -3.72 0.46zM551.7 423.7l3.72 -0.46 0.46 3.72 -3.72 0.46zM555.3 423.3l3.72 -0.46 0.46 3.72 -3.72 0.46zM558.8 422.9l3.72 -0.46 0.46 3.72 -3.72 0.46zM562.4 422.4l3.72 -0.46 0.46 3.72 -3.72 0.46zM566.0 422.0l3.72 -0.46 0.46 3.72 -3.72 0.46zM569.6 421.5l3.72 -0.46 0.46 3.72 -3.72 0.46zM573.1 421.1l3.72 -0.46 0.46 3.72 -3.72 0.46zM580.3 420.2l3.72 -0.46 0.46 3.72 -3.72 0.46zM591.0 418.9l3.72 -0.46 0.46 3.72 -3.72 0.46zM594.6 418.5l3.72 -0.46 0.46 3.72 -3.72 0.46zM601.7 417.6l3.72 -0.46 0.46 3.72 -3.72 0.46zM498.5 433.9l3.72 -0.46 0.46 3.72 -3.72 0.46zM502.1 433.5l3.72 -0.46 0.46 3.72 -3.72 0.46zM505.7 433.0l3.72 -0.46 0.46 3.72 -3.72 0.46zM509.3 432.6l3.72 -0.46 0.46 3.72 -3.72 0.46zM516.4 431.7l3.72 -0.46 0.46 3.72 -3.72 0.46zM520.0 431.3l3.72 -0.46 0.46 3.72 -3.72 0.46zM523.5 430.8l3.72 -0.46 0.46 3.72 -3.72 0.46zM527.1 430.4l3.72 -0.46 0.46 3.72 -3.72 0.46zM530.7 429.9l3.72 -0.46 0.46 3.72 -3.72 0.46zM534.3 429.5l3.72 -0.46 0.46 3.72 -3.72 0.46zM537.8 429.1l3.72 -0.46 0.46 3.72 -3.72 0.46zM541.4 428.6l3.72 -0.46 0.46 3.72 -3.72 0.46zM545.0 428.2l3.72 -0.46 0.46 3.72 -3.72 0.46zM548.6 427.8l3.72 -0.46 0.46 3.72 -3.72 0.46zM552.1 427.3l3.72 -0.46 0.46 3.72 -3.72 0.46zM555.7 426.9l3.72 -0.46 0.46 3.72 -3.72 0.46zM559.3 426.4l3.72 -0.46 0.46 3.72 -3.72 0.46zM577.1 424.2l3.72 -0.46 0.46 3.72 -3.72 0.46zM584.3 423.4l3.72 -0.46 0.46 3.72 -3.72 0.46zM598.6 421.6l3.72 -0.46 0.46 3.72 -3.72 0.46zM605.7 420.7l3.72 -0.46 0.46 3.72 -3.72 0.46zM502.5 437.0l3.72 -0.46 0.46 3.72 -3.72 0.46zM506.1 436.6l3.72 -0.46 0.46 3.72 -3.72 0.46zM509.7 436.2l3.72 -0.46 0.46 3.72 -3.72 0.46zM513.3 435.7l3.72 -0.46 0.46 3.72 -3.72 0.46zM516.8 435.3l3.72 -0.46 0.46 3.72 -3.72 0.46zM520.4 434.8l3.72 -0.46 0.46 3.72 -3.72 0.46zM524.0 434.4l3.72 -0.46 0.46 3.72 -3.72 0.46zM527.6 434.0l3.72 -0.46 0.46 3.72 -3.72 0.46zM531.1 433.5l3.72 -0.46 0.46 3.72 -3.72 0.46zM534.7 433.1l3.72 -0.46 0.46 3.72 -3.72 0.46zM538.3 432.6l3.72 -0.46 0.46 3.72 -3.72 0.46zM541.9 432.2l3.72 -0.46 0.46 3.72 -3.72 0.46zM545.4 431.8l3.72 -0.46 0.46 3.72 -3.72 0.46zM549.0 431.3l3.72 -0.46 0.46 3.72 -3.72 0.46zM552.6 430.9l3.72 -0.46 0.46 3.72 -3.72 0.46zM556.1 430.4l3.72 -0.46 0.46 3.72 -3.72 0.46zM520.9 438.4l3.72 -0.46 0.46 3.72 -3.72 0.46zM524.4 438.0l3.72 -0.46 0.46 3.72 -3.72 0.46zM528.0 437.5l3.72 -0.46 0.46 3.72 -3.72 0.46zM531.6 437.1l3.72 -0.46 0.46 3.72 -3.72 0.46zM535.1 436.7l3.72 -0.46 0.46 3.72 -3.72 0.46zM538.7 436.2l3.72 -0.46 0.46 3.72 -3.72 0.46zM542.3 435.8l3.72 -0.46 0.46 3.72 -3.72 0.46zM545.9 435.3l3.72 -0.46 0.46 3.72 -3.72 0.46zM549.4 434.9l3.72 -0.46 0.46 3.72 -3.72 0.46zM553.0 434.5l3.72 -0.46 0.46 3.72 -3.72 0.46zM556.6 434.0l3.72 -0.46 0.46 3.72 -3.72 0.46zM492.7 445.5l3.72 -0.46 0.46 3.72 -3.72 0.46zM514.1 442.9l3.72 -0.46 0.46 3.72 -3.72 0.46zM517.7 442.4l3.72 -0.46 0.46 3.72 -3.72 0.46zM521.3 442.0l3.72 -0.46 0.46 3.72 -3.72 0.46zM524.9 441.5l3.72 -0.46 0.46 3.72 -3.72 0.46zM528.4 441.1l3.72 -0.46 0.46 3.72 -3.72 0.46zM535.6 440.2l3.72 -0.46 0.46 3.72 -3.72 0.46zM539.2 439.8l3.72 -0.46 0.46 3.72 -3.72 0.46zM542.7 439.4l3.72 -0.46 0.46 3.72 -3.72 0.46zM546.3 438.9l3.72 -0.46 0.46 3.72 -3.72 0.46zM549.9 438.5l3.72 -0.46 0.46 3.72 -3.72 0.46zM553.4 438.0l3.72 -0.46 0.46 3.72 -3.72 0.46zM514.6 446.4l3.72 -0.46 0.46 3.72 -3.72 0.46zM518.2 446.0l3.72 -0.46 0.46 3.72 -3.72 0.46zM521.7 445.6l3.72 -0.46 0.46 3.72 -3.72 0.46zM525.3 445.1l3.72 -0.46 0.46 3.72 -3.72 0.46zM528.9 444.7l3.72 -0.46 0.46 3.72 -3.72 0.46zM536.0 443.8l3.72 -0.46 0.46 3.72 -3.72 0.46zM539.6 443.4l3.72 -0.46 0.46 3.72 -3.72 0.46zM543.2 442.9l3.72 -0.46 0.46 3.72 -3.72 0.46zM546.7 442.5l3.72 -0.46 0.46 3.72 -3.72 0.46zM550.3 442.0l3.72 -0.46 0.46 3.72 -3.72 0.46zM553.9 441.6l3.72 -0.46 0.46 3.72 -3.72 0.46zM557.5 441.2l3.72 -0.46 0.46 3.72 -3.72 0.46zM497.2 452.2l3.72 -0.46 0.46 3.72 -3.72 0.46zM515.0 450.0l3.72 -0.46 0.46 3.72 -3.72 0.46zM522.2 449.1l3.72 -0.46 0.46 3.72 -3.72 0.46zM525.7 448.7l3.72 -0.46 0.46 3.72 -3.72 0.46zM532.9 447.8l3.72 -0.46 0.46 3.72 -3.72 0.46zM536.5 447.4l3.72 -0.46 0.46 3.72 -3.72 0.46zM547.2 446.1l3.72 -0.46 0.46 3.72 -3.72 0.46zM550.8 445.6l3.72 -0.46 0.46 3.72 -3.72 0.46zM554.3 445.2l3.72 -0.46 0.46 3.72 -3.72 0.46zM557.9 444.7l3.72 -0.46 0.46 3.72 -3.72 0.46zM575.8 442.5l3.72 -0.46 0.46 3.72 -3.72 0.46zM604.4 439.0l3.72 -0.46 0.46 3.72 -3.72 0.46zM511.9 454.0l3.72 -0.46 0.46 3.72 -3.72 0.46zM515.5 453.6l3.72 -0.46 0.46 3.72 -3.72 0.46zM519.0 453.1l3.72 -0.46 0.46 3.72 -3.72 0.46zM522.6 452.7l3.72 -0.46 0.46 3.72 -3.72 0.46zM526.2 452.3l3.72 -0.46 0.46 3.72 -3.72 0.46zM529.8 451.8l3.72 -0.46 0.46 3.72 -3.72 0.46zM533.3 451.4l3.72 -0.46 0.46 3.72 -3.72 0.46zM536.9 450.9l3.72 -0.46 0.46 3.72 -3.72 0.46zM540.5 450.5l3.72 -0.46 0.46 3.72 -3.72 0.46zM544.0 450.1l3.72 -0.46 0.46 3.72 -3.72 0.46zM551.2 449.2l3.72 -0.46 0.46 3.72 -3.72 0.46zM554.8 448.8l3.72 -0.46 0.46 3.72 -3.72 0.46zM558.3 448.3l3.72 -0.46 0.46 3.72 -3.72 0.46zM512.3 457.6l3.72 -0.46 0.46 3.72 -3.72 0.46zM515.9 457.2l3.72 -0.46 0.46 3.72 -3.72 0.46zM519.5 456.7l3.72 -0.46 0.46 3.72 -3.72 0.46zM523.0 456.3l3.72 -0.46 0.46 3.72 -3.72 0.46zM526.6 455.8l3.72 -0.46 0.46 3.72 -3.72 0.46zM530.2 455.4l3.72 -0.46 0.46 3.72 -3.72 0.46zM533.8 455.0l3.72 -0.46 0.46 3.72 -3.72 0.46zM537.3 454.5l3.72 -0.46 0.46 3.72 -3.72 0.46zM540.9 454.1l3.72 -0.46 0.46 3.72 -3.72 0.46zM544.5 453.6l3.72 -0.46 0.46 3.72 -3.72 0.46zM548.1 453.2l3.72 -0.46 0.46 3.72 -3.72 0.46zM555.2 452.3l3.72 -0.46 0.46 3.72 -3.72 0.46zM558.8 451.9l3.72 -0.46 0.46 3.72 -3.72 0.46zM509.2 461.6l3.72 -0.46 0.46 3.72 -3.72 0.46zM512.8 461.2l3.72 -0.46 0.46 3.72 -3.72 0.46zM519.9 460.3l3.72 -0.46 0.46 3.72 -3.72 0.46zM523.5 459.8l3.72 -0.46 0.46 3.72 -3.72 0.46zM527.1 459.4l3.72 -0.46 0.46 3.72 -3.72 0.46zM530.6 459.0l3.72 -0.46 0.46 3.72 -3.72 0.46zM534.2 458.5l3.72 -0.46 0.46 3.72 -3.72 0.46zM537.8 458.1l3.72 -0.46 0.46 3.72 -3.72 0.46zM541.3 457.7l3.72 -0.46 0.46 3.72 -3.72 0.46zM544.9 457.2l3.72 -0.46 0.46 3.72 -3.72 0.46zM548.5 456.8l3.72 -0.46 0.46 3.72 -3.72 0.46zM552.1 456.3l3.72 -0.46 0.46 3.72 -3.72 0.46zM555.6 455.9l3.72 -0.46 0.46 3.72 -3.72 0.46zM513.2 464.7l3.72 -0.46 0.46 3.72 -3.72 0.46zM516.8 464.3l3.72 -0.46 0.46 3.72 -3.72 0.46zM520.3 463.9l3.72 -0.46 0.46 3.72 -3.72 0.46zM523.9 463.4l3.72 -0.46 0.46 3.72 -3.72 0.46zM534.6 462.1l3.72 -0.46 0.46 3.72 -3.72 0.46zM538.2 461.7l3.72 -0.46 0.46 3.72 -3.72 0.46zM541.8 461.2l3.72 -0.46 0.46 3.72 -3.72 0.46zM545.4 460.8l3.72 -0.46 0.46 3.72 -3.72 0.46zM548.9 460.4l3.72 -0.46 0.46 3.72 -3.72 0.46zM552.5 459.9l3.72 -0.46 0.46 3.72 -3.72 0.46zM556.1 459.5l3.72 -0.46 0.46 3.72 -3.72 0.46zM563.2 458.6l3.72 -0.46 0.46 3.72 -3.72 0.46zM495.8 470.5l3.72 -0.46 0.46 3.72 -3.72 0.46zM506.5 469.2l3.72 -0.46 0.46 3.72 -3.72 0.46zM513.6 468.3l3.72 -0.46 0.46 3.72 -3.72 0.46zM517.2 467.9l3.72 -0.46 0.46 3.72 -3.72 0.46zM520.8 467.4l3.72 -0.46 0.46 3.72 -3.72 0.46zM524.4 467.0l3.72 -0.46 0.46 3.72 -3.72 0.46zM527.9 466.6l3.72 -0.46 0.46 3.72 -3.72 0.46zM535.1 465.7l3.72 -0.46 0.46 3.72 -3.72 0.46zM538.7 465.2l3.72 -0.46 0.46 3.72 -3.72 0.46zM542.2 464.8l3.72 -0.46 0.46 3.72 -3.72 0.46zM545.8 464.4l3.72 -0.46 0.46 3.72 -3.72 0.46zM549.4 463.9l3.72 -0.46 0.46 3.72 -3.72 0.46zM506.9 472.8l3.72 -0.46 0.46 3.72 -3.72 0.46zM510.5 472.3l3.72 -0.46 0.46 3.72 -3.72 0.46zM517.7 471.4l3.72 -0.46 0.46 3.72 -3.72 0.46zM521.2 471.0l3.72 -0.46 0.46 3.72 -3.72 0.46zM524.8 470.6l3.72 -0.46 0.46 3.72 -3.72 0.46zM528.4 470.1l3.72 -0.46 0.46 3.72 -3.72 0.46zM531.9 469.7l3.72 -0.46 0.46 3.72 -3.72 0.46zM535.5 469.3l3.72 -0.46 0.46 3.72 -3.72 0.46zM542.7 468.4l3.72 -0.46 0.46 3.72 -3.72 0.46zM546.2 467.9l3.72 -0.46 0.46 3.72 -3.72 0.46zM549.8 467.5l3.72 -0.46 0.46 3.72 -3.72 0.46zM553.4 467.1l3.72 -0.46 0.46 3.72 -3.72 0.46zM507.4 476.3l3.72 -0.46 0.46 3.72 -3.72 0.46zM514.5 475.5l3.72 -0.46 0.46 3.72 -3.72 0.46zM518.1 475.0l3.72 -0.46 0.46 3.72 -3.72 0.46zM521.7 474.6l3.72 -0.46 0.46 3.72 -3.72 0.46zM525.2 474.1l3.72 -0.46 0.46 3.72 -3.72 0.46zM532.4 473.3l3.72 -0.46 0.46 3.72 -3.72 0.46zM536.0 472.8l3.72 -0.46 0.46 3.72 -3.72 0.46zM539.5 472.4l3.72 -0.46 0.46 3.72 -3.72 0.46zM546.7 471.5l3.72 -0.46 0.46 3.72 -3.72 0.46zM550.3 471.1l3.72 -0.46 0.46 3.72 -3.72 0.46zM515.0 479.0l3.72 -0.46 0.46 3.72 -3.72 0.46zM518.5 478.6l3.72 -0.46 0.46 3.72 -3.72 0.46zM522.1 478.2l3.72 -0.46 0.46 3.72 -3.72 0.46zM525.7 477.7l3.72 -0.46 0.46 3.72 -3.72 0.46zM529.3 477.3l3.72 -0.46 0.46 3.72 -3.72 0.46zM536.4 476.4l3.72 -0.46 0.46 3.72 -3.72 0.46zM540.0 476.0l3.72 -0.46 0.46 3.72 -3.72 0.46zM543.5 475.5l3.72 -0.46 0.46 3.72 -3.72 0.46zM547.1 475.1l3.72 -0.46 0.46 3.72 -3.72 0.46zM550.7 474.6l3.72 -0.46 0.46 3.72 -3.72 0.46zM511.8 483.0l3.72 -0.46 0.46 3.72 -3.72 0.46zM515.4 482.6l3.72 -0.46 0.46 3.72 -3.72 0.46zM519.0 482.2l3.72 -0.46 0.46 3.72 -3.72 0.46zM522.5 481.7l3.72 -0.46 0.46 3.72 -3.72 0.46zM529.7 480.8l3.72 -0.46 0.46 3.72 -3.72 0.46zM533.3 480.4l3.72 -0.46 0.46 3.72 -3.72 0.46zM540.4 479.5l3.72 -0.46 0.46 3.72 -3.72 0.46zM547.6 478.7l3.72 -0.46 0.46 3.72 -3.72 0.46zM561.8 476.9l3.72 -0.46 0.46 3.72 -3.72 0.46zM508.7 487.1l3.72 -0.46 0.46 3.72 -3.72 0.46zM512.3 486.6l3.72 -0.46 0.46 3.72 -3.72 0.46zM515.8 486.2l3.72 -0.46 0.46 3.72 -3.72 0.46zM523.0 485.3l3.72 -0.46 0.46 3.72 -3.72 0.46zM533.7 484.0l3.72 -0.46 0.46 3.72 -3.72 0.46zM540.8 483.1l3.72 -0.46 0.46 3.72 -3.72 0.46zM548.0 482.2l3.72 -0.46 0.46 3.72 -3.72 0.46zM551.6 481.8l3.72 -0.46 0.46 3.72 -3.72 0.46zM512.7 490.2l3.72 -0.46 0.46 3.72 -3.72 0.46zM516.3 489.8l3.72 -0.46 0.46 3.72 -3.72 0.46zM519.8 489.3l3.72 -0.46 0.46 3.72 -3.72 0.46zM523.4 488.9l3.72 -0.46 0.46 3.72 -3.72 0.46zM530.6 488.0l3.72 -0.46 0.46 3.72 -3.72 0.46zM534.1 487.6l3.72 -0.46 0.46 3.72 -3.72 0.46zM537.7 487.1l3.72 -0.46 0.46 3.72 -3.72 0.46zM541.3 486.7l3.72 -0.46 0.46 3.72 -3.72 0.46zM544.9 486.2l3.72 -0.46 0.46 3.72 -3.72 0.46zM552.0 485.4l3.72 -0.46 0.46 3.72 -3.72 0.46zM513.1 493.8l3.72 -0.46 0.46 3.72 -3.72 0.46zM516.7 493.3l3.72 -0.46 0.46 3.72 -3.72 0.46zM520.3 492.9l3.72 -0.46 0.46 3.72 -3.72 0.46zM523.9 492.4l3.72 -0.46 0.46 3.72 -3.72 0.46zM527.4 492.0l3.72 -0.46 0.46 3.72 -3.72 0.46zM531.0 491.6l3.72 -0.46 0.46 3.72 -3.72 0.46zM534.6 491.1l3.72 -0.46 0.46 3.72 -3.72 0.46zM538.2 490.7l3.72 -0.46 0.46 3.72 -3.72 0.46zM541.7 490.3l3.72 -0.46 0.46 3.72 -3.72 0.46zM548.9 489.4l3.72 -0.46 0.46 3.72 -3.72 0.46zM552.4 488.9l3.72 -0.46 0.46 3.72 -3.72 0.46zM556.0 488.5l3.72 -0.46 0.46 3.72 -3.72 0.46zM513.6 497.3l3.72 -0.46 0.46 3.72 -3.72 0.46zM517.2 496.9l3.72 -0.46 0.46 3.72 -3.72 0.46zM520.7 496.5l3.72 -0.46 0.46 3.72 -3.72 0.46zM527.9 495.6l3.72 -0.46 0.46 3.72 -3.72 0.46zM531.4 495.1l3.72 -0.46 0.46 3.72 -3.72 0.46zM535.0 494.7l3.72 -0.46 0.46 3.72 -3.72 0.46zM538.6 494.3l3.72 -0.46 0.46 3.72 -3.72 0.46zM542.2 493.8l3.72 -0.46 0.46 3.72 -3.72 0.46zM545.7 493.4l3.72 -0.46 0.46 3.72 -3.72 0.46zM549.3 492.9l3.72 -0.46 0.46 3.72 -3.72 0.46zM552.9 492.5l3.72 -0.46 0.46 3.72 -3.72 0.46zM560.0 491.6l3.72 -0.46 0.46 3.72 -3.72 0.46zM514.0 500.9l3.72 -0.46 0.46 3.72 -3.72 0.46zM517.6 500.5l3.72 -0.46 0.46 3.72 -3.72 0.46zM521.2 500.0l3.72 -0.46 0.46 3.72 -3.72 0.46zM539.0 497.8l3.72 -0.46 0.46 3.72 -3.72 0.46zM542.6 497.4l3.72 -0.46 0.46 3.72 -3.72 0.46zM549.7 496.5l3.72 -0.46 0.46 3.72 -3.72 0.46zM553.3 496.1l3.72 -0.46 0.46 3.72 -3.72 0.46zM514.5 504.5l3.72 -0.46 0.46 3.72 -3.72 0.46zM518.0 504.0l3.72 -0.46 0.46 3.72 -3.72 0.46zM521.6 503.6l3.72 -0.46 0.46 3.72 -3.72 0.46zM539.5 501.4l3.72 -0.46 0.46 3.72 -3.72 0.46zM543.0 501.0l3.72 -0.46 0.46 3.72 -3.72 0.46zM571.6 497.5l3.72 -0.46 0.46 3.72 -3.72 0.46zM514.9 508.1l3.72 -0.46 0.46 3.72 -3.72 0.46zM522.0 507.2l3.72 -0.46 0.46 3.72 -3.72 0.46zM539.9 505.0l3.72 -0.46 0.46 3.72 -3.72 0.46zM543.5 504.5l3.72 -0.46 0.46 3.72 -3.72 0.46zM554.2 503.2l3.72 -0.46 0.46 3.72 -3.72 0.46zM511.8 512.1l3.72 -0.46 0.46 3.72 -3.72 0.46zM515.3 511.6l3.72 -0.46 0.46 3.72 -3.72 0.46zM518.9 511.2l3.72 -0.46 0.46 3.72 -3.72 0.46zM522.5 510.8l3.72 -0.46 0.46 3.72 -3.72 0.46zM543.9 508.1l3.72 -0.46 0.46 3.72 -3.72 0.46zM547.5 507.7l3.72 -0.46 0.46 3.72 -3.72 0.46zM554.6 506.8l3.72 -0.46 0.46 3.72 -3.72 0.46zM512.2 515.6l3.72 -0.46 0.46 3.72 -3.72 0.46zM515.8 515.2l3.72 -0.46 0.46 3.72 -3.72 0.46zM519.3 514.8l3.72 -0.46 0.46 3.72 -3.72 0.46zM522.9 514.3l3.72 -0.46 0.46 3.72 -3.72 0.46zM526.5 513.9l3.72 -0.46 0.46 3.72 -3.72 0.46zM537.2 512.6l3.72 -0.46 0.46 3.72 -3.72 0.46zM540.8 512.1l3.72 -0.46 0.46 3.72 -3.72 0.46zM509.1 519.7l3.72 -0.46 0.46 3.72 -3.72 0.46zM512.6 519.2l3.72 -0.46 0.46 3.72 -3.72 0.46zM516.2 518.8l3.72 -0.46 0.46 3.72 -3.72 0.46zM519.8 518.3l3.72 -0.46 0.46 3.72 -3.72 0.46zM544.8 515.3l3.72 -0.46 0.46 3.72 -3.72 0.46zM509.5 523.2l3.72 -0.46 0.46 3.72 -3.72 0.46zM513.1 522.8l3.72 -0.46 0.46 3.72 -3.72 0.46zM516.6 522.3l3.72 -0.46 0.46 3.72 -3.72 0.46zM520.2 521.9l3.72 -0.46 0.46 3.72 -3.72 0.46zM523.8 521.5l3.72 -0.46 0.46 3.72 -3.72 0.46zM541.7 519.3l3.72 -0.46 0.46 3.72 -3.72 0.46zM545.2 518.8l3.72 -0.46 0.46 3.72 -3.72 0.46zM548.8 518.4l3.72 -0.46 0.46 3.72 -3.72 0.46zM509.9 526.8l3.72 -0.46 0.46 3.72 -3.72 0.46zM513.5 526.4l3.72 -0.46 0.46 3.72 -3.72 0.46zM517.1 525.9l3.72 -0.46 0.46 3.72 -3.72 0.46zM520.7 525.5l3.72 -0.46 0.46 3.72 -3.72 0.46zM524.2 525.0l3.72 -0.46 0.46 3.72 -3.72 0.46zM542.1 522.8l3.72 -0.46 0.46 3.72 -3.72 0.46zM545.7 522.4l3.72 -0.46 0.46 3.72 -3.72 0.46zM570.7 519.3l3.72 -0.46 0.46 3.72 -3.72 0.46zM510.4 530.4l3.72 -0.46 0.46 3.72 -3.72 0.46zM514.0 529.9l3.72 -0.46 0.46 3.72 -3.72 0.46zM517.5 529.5l3.72 -0.46 0.46 3.72 -3.72 0.46zM542.5 526.4l3.72 -0.46 0.46 3.72 -3.72 0.46zM507.2 534.4l3.72 -0.46 0.46 3.72 -3.72 0.46zM510.8 533.9l3.72 -0.46 0.46 3.72 -3.72 0.46zM514.4 533.5l3.72 -0.46 0.46 3.72 -3.72 0.46zM507.7 538.0l3.72 -0.46 0.46 3.72 -3.72 0.46zM514.8 537.1l3.72 -0.46 0.46 3.72 -3.72 0.46zM504.6 542.0l3.72 -0.46 0.46 3.72 -3.72 0.46zM508.1 541.5l3.72 -0.46 0.46 3.72 -3.72 0.46zM508.6 545.1l3.72 -0.46 0.46 3.72 -3.72 0.46zM512.1 544.7l3.72 -0.46 0.46 3.72 -3.72 0.46zM509.0 548.7l3.72 -0.46 0.46 3.72 -3.72 0.46zM509.4 552.2l3.72 -0.46 0.46 3.72 -3.72 0.46zM542.5 555.4l3.72 -0.46 0.46 3.72 -3.72 0.46z" fill="#c5c6c6"/>
<polyline points="481.0,287.0 488.0,302.0 492.0,315.0 497.0,330.0 503.0,345.0" stroke="#c5c6c6" stroke-width="3.6" fill="none" stroke-linejoin="round"/>
<polyline points="497.5,285.5 502.5,300.0 508.0,315.0 512.0,330.0 514.0,345.0" stroke="#c5c6c6" stroke-width="3.6" fill="none" stroke-linejoin="round"/>
<polyline points="505.0,295.0 512.0,310.0 518.0,326.0 520.0,345.0" stroke="#c5c6c6" stroke-width="3.6" fill="none" stroke-linejoin="round"/>
<rect x="465.2" y="395.4" width="11" height="5.6" fill="#5c706c" transform="rotate(-7 470 398)"/>
<rect x="467.8" y="285.6" width="3.6" height="3.6" fill="#c5c6c6"/>
<rect x="456.6" y="313.6" width="3.6" height="3.6" fill="#c5c6c6"/>
<rect x="451.0" y="322.4" width="3.6" height="3.6" fill="#c5c6c6"/>
<rect x="465.9" y="322.0" width="3.6" height="3.6" fill="#c5c6c6"/>
<rect x="442.9" y="317.3" width="3.6" height="3.6" fill="#c5c6c6"/>
<rect x="460.2" y="272.2" width="3.6" height="3.6" fill="#c5c6c6"/>
<rect x="618.8" y="344.9" width="3.6" height="3.6" fill="#c5c6c6"/>
<rect x="618.8" y="423.3" width="3.6" height="3.6" fill="#c5c6c6"/>
<rect x="607.0" y="418.2" width="3.6" height="3.6" fill="#c5c6c6"/>
</g>
<path d="M272.7,84L331.25,685M342,84L406.25,685M413,84L482.5,685M484.5,84L556.25,685M556.25,84L631.25,685M627,84L706.25,685M698.75,84L781.25,685M310,124L731,74M310,194.5L731,143.5M310,265.5L731,214.5M310,337L731,286.5M310,409.5L731,359.5M310,483L731,433M310,557.5L731,507.5M310,633L731,583M310,709.5L731,659.5" stroke="rgba(172,172,174,0.45)" stroke-width="1.0" fill="none"/>
<line x1="450.5" y1="329.5" x2="456" y2="357" stroke="#e23a30" stroke-width="5.6" stroke-linecap="round"/>
<line x1="433" y1="363.5" x2="458.5" y2="357.5" stroke="#e23a30" stroke-width="5.6" stroke-linecap="round"/>
<circle cx="383" cy="377" r="2.8" fill="#e23a30"/>
<circle cx="392" cy="374" r="2.8" fill="#e23a30"/>
<circle cx="400" cy="372.4" r="2.8" fill="#e23a30"/>
<circle cx="410" cy="368" r="2.8" fill="#e23a30"/>
<circle cx="424" cy="365" r="2.8" fill="#e23a30"/>
<circle cx="437" cy="362" r="2.8" fill="#e23a30"/>
<rect x="384.2" y="379.2" width="3.6" height="3.6" fill="#111"/>
<rect x="391.2" y="377.8" width="3.6" height="3.6" fill="#111"/>
<rect x="401.2" y="372.2" width="3.6" height="3.6" fill="#111"/>
<rect x="411.2" y="369.2" width="3.6" height="3.6" fill="#111"/>
<rect x="428.2" y="365.2" width="3.6" height="3.6" fill="#111"/>
<rect x="446.2" y="356.2" width="3.6" height="3.6" fill="#111"/>
<rect x="448.2" y="326.2" width="3.6" height="3.6" fill="#111"/>
<circle cx="435" cy="86" r="2.8" fill="#e23a30"/>
<circle cx="467.5" cy="105" r="2.8" fill="#e23a30"/>
<circle cx="473.75" cy="102" r="2.8" fill="#e23a30"/>
<circle cx="548.75" cy="117.75" r="2.8" fill="#e23a30"/>
<circle cx="552" cy="139.5" r="2.8" fill="#e23a30"/>
<circle cx="415.5" cy="213.5" r="2.8" fill="#e23a30"/>
<circle cx="436" cy="224" r="2.8" fill="#e23a30"/>
<circle cx="421.25" cy="297.25" r="2.8" fill="#e23a30"/>
<circle cx="430" cy="307.25" r="2.8" fill="#e23a30"/>
<circle cx="455" cy="305.5" r="2.8" fill="#e23a30"/>
<rect x="434.2" y="225.2" width="3.6" height="3.6" fill="#111"/>
<rect x="425.7" y="310.4" width="3.6" height="3.6" fill="#111"/>
<rect x="453.2" y="306.7" width="3.6" height="3.6" fill="#111"/>
<rect x="441.9" y="270.4" width="3.6" height="3.6" fill="#111"/>
<rect x="498.9" y="252.2" width="3.6" height="3.6" fill="#111"/>
<line x1="505" y1="255" x2="521" y2="249.5" stroke="#e23a30" stroke-width="4.6" stroke-linecap="round"/>
<line x1="557.5" y1="317.7" x2="574.6" y2="326.3" stroke="#111" stroke-width="3.5" stroke-linecap="round"/>
<line x1="574.6" y1="325" x2="586.5" y2="325" stroke="#e23a30" stroke-width="4.6" stroke-linecap="round"/>
<line x1="586.5" y1="325" x2="592" y2="338" stroke="#e23a30" stroke-width="4.6" stroke-linecap="round"/>
<circle cx="533.7" cy="329.7" r="3" fill="#e23a30"/>
<circle cx="543.9" cy="334.8" r="3" fill="#e23a30"/>
<circle cx="533.7" cy="343.3" r="3" fill="#e23a30"/>
<circle cx="550.7" cy="345" r="3" fill="#e23a30"/>
<rect x="538.7" y="329.6" width="3.6" height="3.6" fill="#111"/>
<line x1="576.3" y1="351.8" x2="578" y2="365.5" stroke="#111" stroke-width="3.5" stroke-linecap="round"/>
<line x1="579" y1="348.4" x2="582" y2="365.5" stroke="#e23a30" stroke-width="4.6" stroke-linecap="round"/>
<line x1="584.8" y1="363.8" x2="605.3" y2="360.4" stroke="#111" stroke-width="3.5" stroke-linecap="round"/>
<polyline points="614,382.5 608,383.5 605,389 607,395" stroke="#e23a30" stroke-width="5.5" fill="none" stroke-linecap="round" stroke-linejoin="round"/>
<rect x="603.5" y="383.0" width="3" height="3" fill="#c5c6c6"/>
<circle cx="649.6" cy="375.7" r="3" fill="#e23a30"/>
<circle cx="670" cy="370.6" r="3" fill="#e23a30"/>
<circle cx="683.7" cy="367.2" r="3" fill="#e23a30"/>
<circle cx="663.2" cy="353.5" r="3" fill="#e23a30"/>
<rect x="661.4" y="348.3" width="3.6" height="3.6" fill="#111"/>
<rect x="618.8" y="344.9" width="3.6" height="3.6" fill="#c5c6c6"/>
<rect x="618.8" y="423.3" width="3.6" height="3.6" fill="#c5c6c6"/>
<rect x="634.2" y="425.0" width="3.6" height="3.6" fill="#111"/>
<rect x="634.2" y="421.2" width="3.6" height="3.6" fill="#111"/>
<line x1="579.5" y1="394" x2="583.5" y2="413.2" stroke="#111" stroke-width="3.5" stroke-linecap="round"/>
<line x1="583" y1="392.7" x2="588.2" y2="413.2" stroke="#e23a30" stroke-width="4.6" stroke-linecap="round"/>
<line x1="584.8" y1="433.7" x2="579.7" y2="443.9" stroke="#e23a30" stroke-width="4.6" stroke-linecap="round"/>
<rect x="586.4" y="428.4" width="3.6" height="3.6" fill="#111"/>
<rect x="562.5" y="445.5" width="3.6" height="3.6" fill="#111"/>
<line x1="455.2" y1="392" x2="457" y2="404" stroke="#111" stroke-width="3.5" stroke-linecap="round"/>
<line x1="458" y1="392.7" x2="461" y2="404.7" stroke="#e23a30" stroke-width="4.6" stroke-linecap="round"/>
<line x1="436" y1="416" x2="439.5" y2="424" stroke="#e23a30" stroke-width="5.5" stroke-linecap="round"/>
<rect x="439.2" y="423.7" width="3.6" height="3.6" fill="#111"/>
<circle cx="450.1" cy="420" r="2.8" fill="#e23a30"/>
<circle cx="456.9" cy="420" r="2.8" fill="#e23a30"/>
<circle cx="448.4" cy="406.4" r="2.8" fill="#e23a30"/>
<polyline points="467.5,416.5 474,418.5 480,423 488,432 495,436" stroke="#e23a30" stroke-width="6" fill="none" stroke-linecap="round" stroke-linejoin="round"/>
<line x1="503" y1="437" x2="518.3" y2="437" stroke="#e23a30" stroke-width="4.6" stroke-linecap="round"/>
<line x1="501.3" y1="428.5" x2="503" y2="437" stroke="#111" stroke-width="3.5" stroke-linecap="round"/>
<rect x="504.6" y="442.1" width="3.6" height="3.6" fill="#111"/>
<line x1="526" y1="535.5" x2="556" y2="533.5" stroke="#111" stroke-width="3.2" stroke-linecap="round"/>
<rect x="516.2" y="535.7" width="3.6" height="3.6" fill="#111"/>
<line x1="521" y1="541" x2="557.5" y2="537.5" stroke="#e23a30" stroke-width="4.5" stroke-linecap="round"/>
<line x1="565.5" y1="539.2" x2="572" y2="539.2" stroke="#e23a30" stroke-width="4.2" stroke-linecap="round"/>
<circle cx="583.4" cy="554.9" r="3" fill="#e23a30"/>
<circle cx="516.4" cy="573.6" r="3" fill="#e23a30"/>
<circle cx="582" cy="509.9" r="3" fill="#e23a30"/>
<circle cx="576.7" cy="516.6" r="3" fill="#e23a30"/>
<circle cx="568.6" cy="523.3" r="3" fill="#e23a30"/>
<circle cx="583.4" cy="523.3" r="3" fill="#e23a30"/>
<rect x="580.2" y="504.0" width="3.6" height="3.6" fill="#111"/>
<rect x="507.9" y="561.6" width="3.6" height="3.6" fill="#111"/>
<rect x="498.5" y="465.2" width="3.6" height="3.6" fill="#111"/>
<rect x="501.2" y="471.9" width="3.6" height="3.6" fill="#111"/>
<rect x="497.2" y="477.2" width="3.6" height="3.6" fill="#111"/>
<rect x="561.5" y="445.9" width="3.6" height="3.6" fill="#111"/>
<rect x="617.7" y="423.7" width="3.6" height="3.6" fill="#c5c6c6"/>
<rect x="607.0" y="418.2" width="3.6" height="3.6" fill="#c5c6c6"/>
<line x1="521.5" y1="384" x2="521.5" y2="371" stroke="#4c4" stroke-width="2.2" stroke-linecap="round"/>
<line x1="521.5" y1="384" x2="537.5" y2="382.5" stroke="#5b4" stroke-width="2.2" stroke-linecap="round"/>
<line x1="521.5" y1="384" x2="522" y2="398.5" stroke="#c33" stroke-width="2.2" stroke-linecap="round"/>
<line x1="551" y1="409.5" x2="563.5" y2="406" stroke="#5d5" stroke-width="2.4" stroke-linecap="round"/>
<line x1="551.5" y1="412.5" x2="564" y2="409" stroke="#5d5" stroke-width="2.4" stroke-linecap="round"/>
<line x1="560.4" y1="393.5" x2="564.4" y2="408" stroke="#c33" stroke-width="2.2" stroke-linecap="round"/>
<line x1="522" y1="385" x2="563" y2="409" stroke="#b8b860" stroke-width="1" stroke-dasharray="2,2"/>
<!--/VIEW-->
</svg>

<!-- right panel -->
<div class="hdr" style="left:749px;top:84px;width:217px"></div>
<div class="t" style="left:770px;top:88px;font-size:11.5px;color:#4a4a4a">Views</div>
<div class="a" style="left:749px;top:135px;width:217px;height:522px;background:#fff;border-left:1px solid #d0d0d0;border-top:1px solid #e2e2e2"></div>
<div class="a" style="left:857px;top:136px;width:1px;height:521px;background:#e6e6e6"></div>

<!-- views panel -->
<svg class="a" style="left:751px;top:88px" width="14" height="10" viewBox="0 0 14 10"><path d="M0 2L4 5L0 8Z" fill="#333"/><rect x="4" y="1.5" width="9.5" height="7" rx="2.5" fill="#333"/></svg>
<div class="t" style="left:751px;top:112px;font-size:12px;color:#555">Type:</div>
<div class="a" style="left:785px;top:108px;width:106px;height:19px;border:1px solid #d6d6d6;border-radius:3px;background:#fff"></div>
<div class="a" style="left:786px;top:109px;width:90px;height:17px;overflow:hidden"><div class="t" style="left:3px;top:3px;font-size:12px;color:#555">Orbit (rviz_default</div></div>
<div class="arrd" style="left:876px;top:116px"></div>
<div class="btn" style="left:898px;top:108px;width:66px;height:19px;background:#fff;color:#555">Zero</div>
<div class="arrd" style="left:755px;top:142px"></div>
<div class="t" style="left:769px;top:138px;font-size:12px;font-weight:bold;color:#555">Current View</div>
<div class="t" style="left:860px;top:138px;font-size:12px;font-weight:bold;color:#555">Orbit (rviz)</div>
<div class="t tree" style="left:784px;top:154px">Near Clip ...</div>
<div class="t tree" style="left:860px;top:154px">0.01</div>
<div class="arr" style="left:773px;top:172px"></div>
<div class="t tree" style="left:784px;top:169px">Enable Ste...</div>
<div class="cbe" style="left:861px;top:169px"></div>
<div class="t tree" style="left:784px;top:184px">Invert Z Axis</div>
<div class="cbe" style="left:861px;top:184px"></div>
<div class="t tree" style="left:784px;top:200px">Target Fra...</div>
<div class="t tree" style="left:860px;top:200px">&lt;Fixed Frame&gt;</div>
<div class="t tree" style="left:784px;top:215px">Distance</div>
<div class="t tree" style="left:860px;top:215px">10</div>
<div class="t tree" style="left:784px;top:230px">Focal Shap...</div>
<div class="t tree" style="left:860px;top:230px">0.05</div>
<div class="t tree" style="left:784px;top:246px">Focal Shap...</div>
<div class="cb" style="left:861px;top:246px"><svg width="12" height="12" viewBox="0 0 12 12" style="position:absolute;left:0;top:0"><path d="M2.3 6.2L4.9 8.8L9.8 3.2" stroke="#fff" stroke-width="1.5" fill="none"/></svg></div>
<div class="t tree" style="left:784px;top:261px">Yaw</div>
<div class="t tree" style="left:860px;top:261px">6.16358</div>
<div class="t tree" style="left:784px;top:276px">Pitch</div>
<div class="t tree" style="left:860px;top:276px">1.5104</div>
<div class="arr" style="left:773px;top:295px"></div>
<div class="t tree" style="left:784px;top:292px">Focal Point</div>
<div class="t tree" style="left:860px;top:292px">0; 0; 0</div>
<div class="btn" style="left:751px;top:664px;width:67px;background:#fff;color:#555">Save</div>
<div class="btn" style="left:825px;top:664px;width:66px;background:#fff;color:#555">Remove</div>
<div class="btn" style="left:898px;top:664px;width:66px;background:#fff;color:#555">Rename</div>
<!-- close buttons & splitters -->
<svg class="a" style="left:279px;top:88px" width="11" height="11" viewBox="0 0 11 11"><circle cx="5.5" cy="5.5" r="5" fill="#fbe3e3"/><circle cx="5.5" cy="5.5" r="4.2" fill="#c8202a"/><path d="M3.8 3.8L7.2 7.2M7.2 3.8L3.8 7.2" stroke="#f5d0d0" stroke-width="1.1"/></svg>
<svg class="a" style="left:954px;top:88px" width="11" height="11" viewBox="0 0 11 11"><circle cx="5.5" cy="5.5" r="5" fill="#fbe3e3"/><circle cx="5.5" cy="5.5" r="4.2" fill="#c8202a"/><path d="M3.8 3.8L7.2 7.2M7.2 3.8L3.8 7.2" stroke="#f5d0d0" stroke-width="1.1"/></svg>
<div class="a" style="left:301px;top:380.5px;width:0;height:0;border-top:4px solid transparent;border-bottom:4px solid transparent;border-right:4.3px solid #4a4a4a"></div>
<div class="a" style="left:736px;top:380.8px;width:0;height:0;border-top:4px solid transparent;border-bottom:4px solid transparent;border-left:4.3px solid #4a4a4a"></div>
<!-- status bar -->
<div class="btn" style="left:3px;top:688px;width:38px;height:18px;font-size:12px">Reset</div>
<div class="a" style="left:44px;top:688px;width:867px;height:17px;border:1px solid #dedede;background:#f3f4f5"></div>
<div class="a" style="left:914px;top:687px;width:34px;height:18px;border:1px solid #dedede;background:#f3f4f5"></div>
<div class="t" style="left:921px;top:690px;font-size:12px;color:#555">6 fps</div>
<div class="a" style="left:0;top:707px;width:968px;height:2px;background:#a0a0a0"></div>
</body></html>
